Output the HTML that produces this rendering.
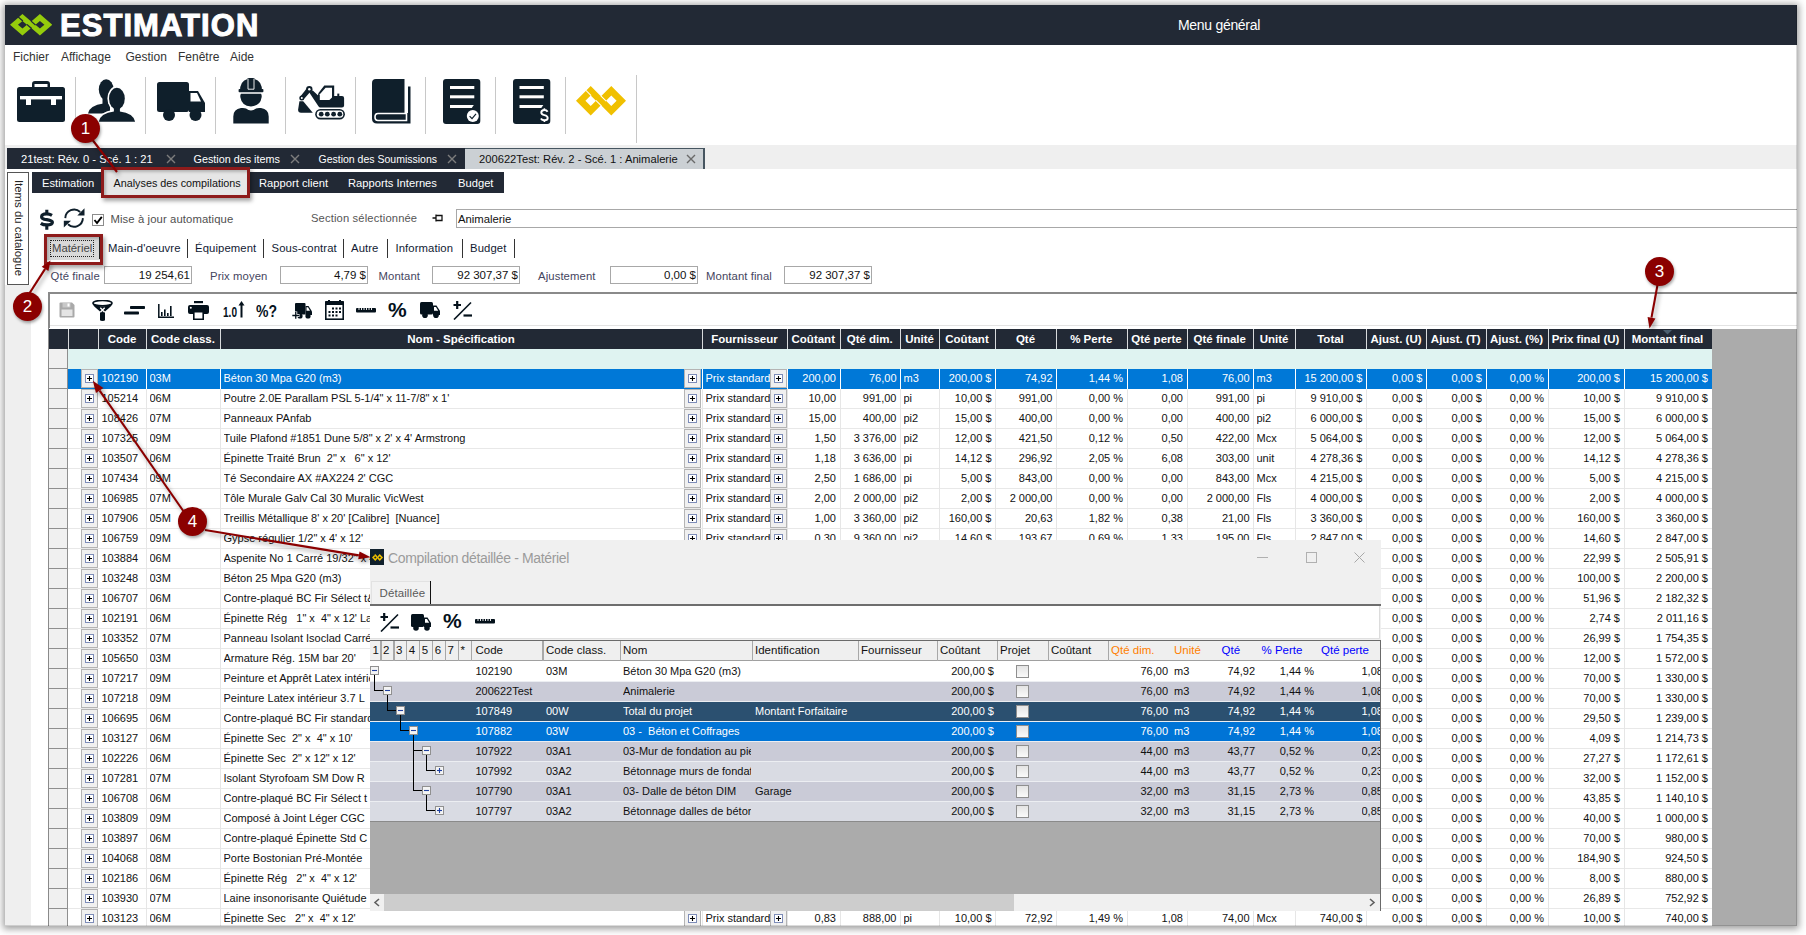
<!DOCTYPE html>
<html><head><meta charset="utf-8"><title>Estimation</title>
<style>html,body{margin:0;padding:0;background:#fff;width:1806px;height:935px;overflow:hidden;}
body{position:relative;font-family:"Liberation Sans",sans-serif;}
#win{position:absolute;left:0;top:0;width:1806px;height:935px;}
#win div,#win svg{position:absolute;box-sizing:border-box;}
.t{white-space:pre;font-size:11.5px;line-height:14px;color:#222;}
.shadow{box-shadow:0 0 6px 2px rgba(0,0,0,0.35);}
.hd{color:#fff;font-weight:bold;font-size:11.5px;}
.cl{font-size:11px;}
</style></head><body>
<div id="win">
<div style="left:5px;top:5px;width:1792px;height:921px;background:#fff;box-shadow:0 1px 7px 2px rgba(0,0,0,0.38);"></div><div style="left:5px;top:5px;width:1792px;height:40px;background:#222935;"></div><svg style="left:10px;top:14.1px;width:42.4px;height:21.5px" viewBox="0 0 34 20" preserveAspectRatio="none"><path fill="#95cc0c" fill-rule="evenodd" d="M0 10 L10 0 L20 10 L10 20 Z M6.4 10 L10 13.6 L13.6 10 L10 6.4 Z"/><path fill="#95cc0c" fill-rule="evenodd" d="M14 10 L24 0 L34 10 L24 20 Z M20.4 10 L24 13.6 L27.6 10 L24 6.4 Z"/><path d="M6.5 2.7 L10.3 6.5 M13.5 9.7 L17.3 13.5 M16.9 6.7 L20.5 10.3" stroke="#222935" stroke-width="1.1"/></svg><div class="t" style="left:60px;top:7px;font-size:31px;line-height:37px;font-weight:bold;color:#fff;letter-spacing:1.05px;-webkit-text-stroke:1px #fff;">ESTIMATION</div><div class="t" style="left:1178px;top:17px;font-size:14px;line-height:16px;color:#fff;letter-spacing:-0.3px;">Menu général</div><div class="t" style="left:13px;top:49.5px;font-size:12px;color:#333;">Fichier</div><div class="t" style="left:61px;top:49.5px;font-size:12px;color:#333;">Affichage</div><div class="t" style="left:125.5px;top:49.5px;font-size:12px;color:#333;">Gestion</div><div class="t" style="left:178px;top:49.5px;font-size:12px;color:#333;">Fenêtre</div><div class="t" style="left:230px;top:49.5px;font-size:12px;color:#333;">Aide</div><div style="left:75px;top:77px;width:1px;height:57px;background:#c8c8c8;"></div><div style="left:145px;top:77px;width:1px;height:57px;background:#c8c8c8;"></div><div style="left:215px;top:77px;width:1px;height:57px;background:#c8c8c8;"></div><div style="left:285px;top:77px;width:1px;height:57px;background:#c8c8c8;"></div><div style="left:355px;top:77px;width:1px;height:57px;background:#c8c8c8;"></div><div style="left:425px;top:77px;width:1px;height:57px;background:#c8c8c8;"></div><div style="left:495px;top:77px;width:1px;height:57px;background:#c8c8c8;"></div><div style="left:565px;top:77px;width:1px;height:57px;background:#c8c8c8;"></div><div style="left:636px;top:75px;width:1px;height:68px;background:#c8c8c8;"></div><svg style="left:17px;top:81px;width:48px;height:41px" viewBox="0 0 48 41"><g fill="#0f1f2b">
<path d="M15 6 V3 Q15 0 18 0 H30 Q33 0 33 3 V6 H30.5 V3 H17.5 V6 Z"/>
<rect x="0" y="6" width="48" height="35" rx="2.5"/></g>
<rect x="3" y="15" width="42" height="3.4" fill="#fff"/><rect x="9" y="18" width="5" height="6" fill="#fff"/><rect x="34" y="18" width="5" height="6" fill="#fff"/>
</svg><svg style="left:88px;top:79px;width:50px;height:45px" viewBox="0 0 50 45"><g fill="#0f1f2b">
<ellipse cx="18.2" cy="10.6" rx="7.4" ry="10.4"/><rect x="14.5" y="18" width="5.5" height="7.5"/>
<path d="M0 34.6 Q1.5 26.5 15.5 24.6 H22 V34.6 Z"/></g>
<g fill="#fff" stroke="#fff" stroke-width="3.2" stroke-linejoin="round"><ellipse cx="28.9" cy="19.6" rx="7.9" ry="10.9"/><rect x="25.9" y="27" width="6" height="7"/><path d="M10.7 42.8 Q12.5 34.2 26 32.6 H31.8 Q45.3 34.2 47.1 42.8 Z"/></g>
<g fill="#0f1f2b"><ellipse cx="28.9" cy="19.6" rx="7.9" ry="10.9"/><rect x="25.9" y="27" width="6" height="7"/><path d="M10.7 42.8 Q12.5 34.2 26 32.6 H31.8 Q45.3 34.2 47.1 42.8 Z"/></g>
</svg><svg style="left:157px;top:82px;width:48px;height:40px" viewBox="0 0 48 40"><g fill="#0f1f2b">
<rect x="0" y="0" width="32" height="30" rx="2.5"/>
<path d="M32 9 H41 L48 21 V30 H32 Z"/>
<circle cx="12" cy="33" r="6"/><circle cx="38.5" cy="33" r="6"/></g>
<path d="M33.5 11 H40 L44 19.5 H33.5 Z" fill="#fff"/>
</svg><svg style="left:233px;top:78px;width:36px;height:46px" viewBox="0 0 36 46"><g fill="#0f1f2b">
<path d="M7 13 Q7 3 14.5 1 V0 H21.5 V1 Q29 3 29 13 Z"/>
<rect x="5.6" y="11" width="24.8" height="3.2" rx="0.8"/>
<path d="M8 15.8 H28 Q29.2 17.5 28.4 20 Q27.5 27.5 18 28.6 Q8.5 27.5 7.6 20 Q6.8 17.5 8 15.8 Z"/>
<path d="M0.3 45.6 V38.5 Q0.3 31 8 30 Q11.5 29.6 13 30.6 Q15.5 32.6 18 32.6 Q20.5 32.6 23 30.6 Q24.5 29.6 28 30 Q35.7 31 35.7 38.5 V45.6 Z"/>
</g><path d="M15 0.6 V11.2 H21 V0.6" stroke="#fff" stroke-width="0.9" fill="none"/>
</svg><svg style="left:296px;top:84px;width:50px;height:37px" viewBox="0 0 50 37"><g fill="#0f1f2b">
<path d="M3.4 17.2 H7.2 L16.8 28.7 H5 Q2.1 28.7 2.1 25.8 Z"/>
<path d="M13.3 8.6 L16.8 6.5 L21.9 11.3 L22.5 9.1 L28.3 1.4 H38.2 V11.9 H46 Q48.1 11.9 48.1 14 V21.5 Q48.1 23.6 46 23.6 H24.2 Q23.2 23.6 22.6 22.6 Z"/>
<path d="M11 4 L15.5 6.5 L7.5 15.5 L4 13 Z"/>
<rect x="41.3" y="9.6" width="2" height="3"/>
<circle cx="13.3" cy="5.2" r="3.2"/><circle cx="5.8" cy="14" r="2.5"/>
<rect x="19.2" y="25" width="29.7" height="10.4" rx="5.2"/>
</g>
<circle cx="13.3" cy="5.2" r="1.2" fill="#fff"/><circle cx="5.8" cy="14" r="1" fill="#fff"/>
<path d="M23.8 10.25 L29.6 3.8 H36 V13.5 L33.4 16.1 H23.8 Z" fill="#fff"/>
<rect x="20.8" y="26.6" width="26.5" height="7.2" rx="3.6" fill="#fff"/>
<g fill="#0f1f2b"><circle cx="25.2" cy="30.2" r="2.4"/><circle cx="31.3" cy="30.2" r="2.4"/><circle cx="37.6" cy="30.2" r="2.4"/><circle cx="43.8" cy="30.2" r="2.4"/></g>
</svg><svg style="left:372px;top:79px;width:39px;height:45px" viewBox="0 0 39 45"><g fill="#0f1f2b">
<path d="M4 0 H32.5 V34 H36 V7.5 H38.5 V44.5 H5 Q0 44.5 0 39.5 V4 Q0 0 4 0 Z"/></g>
<path d="M6 34.5 H34.5 V41.5 H6 Q3 41.5 3 38 Q3 34.5 6 34.5 Z" fill="none" stroke="#fff" stroke-width="1.6"/>
</svg><svg style="left:442.5px;top:79px;width:38px;height:45px" viewBox="0 0 38 45"><rect x="0" y="0" width="37.3" height="45" rx="3" fill="#0f1f2b"/>
<g fill="#fff"><rect x="7" y="7" width="24.3" height="3"/><rect x="7" y="16.3" width="24.3" height="3"/><path d="M7 26 H30.8 L28.8 29 H7 Z"/>
<circle cx="29.8" cy="37" r="6"/></g><path d="M26.6 37.2 L29 39.6 L33 34.8" stroke="#0f1f2b" stroke-width="1.2" fill="none"/>
</svg><svg style="left:513px;top:79px;width:38px;height:45px" viewBox="0 0 38 45"><rect x="0" y="0" width="37.3" height="45" rx="3" fill="#0f1f2b"/>
<g fill="#fff"><rect x="6.5" y="7" width="24.3" height="3"/><rect x="6.5" y="16.3" width="24.3" height="3"/><path d="M6.5 26 H30.3 L28.3 29 H6.5 Z"/></g>
</svg><svg style="left:539px;top:107px;width:11px;height:16px" viewBox="0 0 11 16"><path d="M8.6 4.8 Q7.6 3 5.4 3 Q2.3 3 2.3 5.6 Q2.3 7.5 5.4 8.1 Q8.7 8.8 8.7 11 Q8.7 13.3 5.4 13.3 Q3 13.3 1.9 11.4" stroke="#fff" stroke-width="1.9" fill="none"/><path d="M5.4 1.2 V3.2 M5.4 13 V15" stroke="#fff" stroke-width="1.6"/></svg><svg style="left:576.1px;top:86.1px;width:50px;height:29.6px" viewBox="0 0 34 20" preserveAspectRatio="none"><path fill="#f0c000" fill-rule="evenodd" d="M0 10 L10 0 L20 10 L10 20 Z M6.4 10 L10 13.6 L13.6 10 L10 6.4 Z"/><path fill="#f0c000" fill-rule="evenodd" d="M14 10 L24 0 L34 10 L24 20 Z M20.4 10 L24 13.6 L27.6 10 L24 6.4 Z"/><path d="M6.5 2.7 L10.3 6.5 M13.5 9.7 L17.3 13.5 M16.9 6.7 L20.5 10.3" stroke="#fff" stroke-width="0.7"/></svg><div style="left:5px;top:145px;width:1792px;height:24px;background:#efefef;"></div><div style="left:7px;top:148px;width:458px;height:21px;background:#222935;"></div><div style="left:465px;top:148px;width:240px;height:21px;background:#cbd0d4;border-top:1px solid #465560;border-right:2px solid #465560;"></div><div class="t" style="left:21px;top:152px;color:#fff;font-size:11.2px;">21test: Rév. 0 - Scé. 1 : 21</div><div class="t" style="left:193.5px;top:152px;color:#fff;font-size:10.8px;">Gestion des items</div><div class="t" style="left:318.5px;top:152px;color:#fff;font-size:10.5px;">Gestion des Soumissions</div><div class="t" style="left:479px;top:152px;color:#111;font-size:11.2px;">200622Test: Rév. 2 - Scé. 1 : Animalerie</div><svg style="left:165.5px;top:154px;width:10px;height:10px" viewBox="0 0 10 10"><path d="M1 1 L9 9 M9 1 L1 9" stroke="#7d7d7d" stroke-width="1.4"/></svg><svg style="left:289.5px;top:154px;width:10px;height:10px" viewBox="0 0 10 10"><path d="M1 1 L9 9 M9 1 L1 9" stroke="#7d7d7d" stroke-width="1.4"/></svg><svg style="left:447px;top:154px;width:10px;height:10px" viewBox="0 0 10 10"><path d="M1 1 L9 9 M9 1 L1 9" stroke="#7d7d7d" stroke-width="1.4"/></svg><svg style="left:686px;top:154px;width:10px;height:10px" viewBox="0 0 10 10"><path d="M1 1 L9 9 M9 1 L1 9" stroke="#6a6a6a" stroke-width="1.4"/></svg><div style="left:32px;top:172px;width:472px;height:21px;background:#222935;"></div><div style="left:104px;top:170px;width:145px;height:25px;background:#e6e6e6;"></div><div class="t" style="left:42px;top:176px;color:#fff;font-size:11.2px;">Estimation</div><div class="t" style="left:113.5px;top:176px;color:#111;font-size:10.8px;">Analyses des compilations</div><div class="t" style="left:259px;top:176px;color:#fff;font-size:11.2px;">Rapport client</div><div class="t" style="left:348px;top:176px;color:#fff;font-size:11.2px;">Rapports Internes</div><div class="t" style="left:458px;top:176px;color:#fff;font-size:11.2px;">Budget</div><div style="left:7px;top:172px;width:22px;height:113px;border:1px solid #555;background:#fff;"></div><div class="t" style="left:-33px;top:221px;width:104px;height:14px;transform:rotate(90deg);font-size:11.4px;color:#222;text-align:center">Items du catalogue</div><div style="left:5px;top:285px;width:26px;height:641px;background:#efefef;"></div><div style="left:0;top:0;width:1797px;height:926px;overflow:hidden"><svg style="left:38px;top:209px;width:18px;height:22px" viewBox="0 0 18 22">
<path d="M14 6.4 Q11.5 4.9 8.8 4.9 Q3.6 4.9 3.6 7.9 Q3.6 9.8 8.8 10.7 Q14.4 11.7 14.4 13.3 Q14.4 15.9 8.8 15.9 Q5.2 15.9 2.8 14.3" stroke="#0f1f2b" stroke-width="3.2" fill="none"/>
<path d="M8.8 0.8 V4 M8.8 16.5 V20.7" stroke="#0f1f2b" stroke-width="3.1"/></svg><svg style="left:61px;top:206px;width:26px;height:24px" viewBox="0 0 26 24">
<path d="M4.3 12.1 A8.8 8.8 0 0 1 19.2 6" stroke="#0f1f2b" stroke-width="1.9" fill="none"/>
<path d="M21.9 12.1 A8.8 8.8 0 0 1 7 18.2" stroke="#0f1f2b" stroke-width="1.9" fill="none"/>
<path d="M23.5 2.2 V9.4 H16.3 Z" fill="#0f1f2b"/>
<path d="M2.8 14.7 H10 L2.8 21.6 Z" fill="#0f1f2b"/>
</svg><div style="left:92px;top:214px;width:12px;height:12px;border:1px solid #8c8c8c;background:#fff;"></div><svg style="left:93px;top:215px;width:10px;height:10px" viewBox="0 0 10 10"><path d="M1.5 5 L4 8 L8.8 1.8" stroke="#000" stroke-width="1.9" fill="none"/></svg><div class="t" style="left:110.5px;top:212px;color:#505050;font-size:11.3px;letter-spacing:0.1px;">Mise à jour automatique</div><div class="t" style="left:311px;top:211px;color:#555;font-size:11.2px;letter-spacing:0.15px;">Section sélectionnée</div><svg style="left:432px;top:213px;width:11px;height:10px" viewBox="0 0 11 10"><path d="M0.5 5 H4 M4 1.5 V8.5 M4 2.5 H10 V7.5 H4" stroke="#111" stroke-width="1.3" fill="none"/></svg><div style="left:456px;top:209px;width:1345px;height:19px;border:1px solid #a8a8a8;background:#fff;"></div><div class="t" style="left:458px;top:212px;color:#111;font-size:11.3px;">Animalerie</div><div style="left:46px;top:236px;width:54px;height:24px;background:#d9d9d9;"></div><div style="left:50px;top:240px;width:44px;height:17px;border:1px dotted #222;"></div><div style="left:99px;top:237px;width:1.5px;height:22px;background:#222;"></div><div class="t" style="left:52px;top:241px;color:#444;font-size:11.3px;">Matériel</div><div class="t" style="left:108px;top:241px;color:#111a33;font-size:11.3px;letter-spacing:0.1px;">Main-d'oeuvre</div><div class="t" style="left:195px;top:241px;color:#111a33;font-size:11.3px;letter-spacing:0.1px;">Équipement</div><div class="t" style="left:271.5px;top:241px;color:#111a33;font-size:11.3px;letter-spacing:0.1px;">Sous-contrat</div><div class="t" style="left:351px;top:241px;color:#111a33;font-size:11.3px;letter-spacing:0.1px;">Autre</div><div class="t" style="left:395.5px;top:241px;color:#111a33;font-size:11.3px;letter-spacing:0.1px;">Information</div><div class="t" style="left:470px;top:241px;color:#111a33;font-size:11.3px;letter-spacing:0.1px;">Budget</div><div style="left:186.5px;top:239px;width:1.2px;height:19px;background:#333;"></div><div style="left:262.5px;top:239px;width:1.2px;height:19px;background:#333;"></div><div style="left:342.5px;top:239px;width:1.2px;height:19px;background:#333;"></div><div style="left:386.5px;top:239px;width:1.2px;height:19px;background:#333;"></div><div style="left:461.5px;top:239px;width:1.2px;height:19px;background:#333;"></div><div style="left:513.5px;top:239px;width:1.2px;height:19px;background:#333;"></div><div class="t" style="left:50.5px;top:269px;color:#454560;font-size:11.3px;letter-spacing:0.1px;">Qté finale</div><div class="t" style="left:210px;top:269px;color:#454560;font-size:11.3px;letter-spacing:0.1px;">Prix moyen</div><div class="t" style="left:378.5px;top:269px;color:#454560;font-size:11.3px;letter-spacing:0.1px;">Montant</div><div class="t" style="left:538px;top:269px;color:#454560;font-size:11.3px;letter-spacing:0.1px;">Ajustement</div><div class="t" style="left:706px;top:269px;color:#454560;font-size:11.3px;letter-spacing:0.1px;">Montant final</div><div style="left:104px;top:266px;width:88px;height:18px;border:1px solid #a8a8a8;background:#fff;"></div><div class="t" style="left:104px;top:268px;width:86px;text-align:right;color:#111;font-size:11.5px;">19 254,61</div><div style="left:280px;top:266px;width:88px;height:18px;border:1px solid #a8a8a8;background:#fff;"></div><div class="t" style="left:280px;top:268px;width:86px;text-align:right;color:#111;font-size:11.5px;">4,79 $</div><div style="left:432px;top:266px;width:88px;height:18px;border:1px solid #a8a8a8;background:#fff;"></div><div class="t" style="left:432px;top:268px;width:86px;text-align:right;color:#111;font-size:11.5px;">92 307,37 $</div><div style="left:610px;top:266px;width:88px;height:18px;border:1px solid #a8a8a8;background:#fff;"></div><div class="t" style="left:610px;top:268px;width:86px;text-align:right;color:#111;font-size:11.5px;">0,00 $</div><div style="left:784px;top:266px;width:88px;height:18px;border:1px solid #a8a8a8;background:#fff;"></div><div class="t" style="left:784px;top:268px;width:86px;text-align:right;color:#111;font-size:11.5px;">92 307,37 $</div><div style="left:48px;top:292px;width:1749px;height:2px;background:#8a8a8a;"></div><div style="left:48px;top:292px;width:2px;height:36px;background:#8a8a8a;"></div><div style="left:50px;top:325px;width:1747px;height:1px;background:#e3e3e3;"></div><svg style="left:58.5px;top:302px;width:16px;height:16px" viewBox="0 0 16 16"><path d="M0.5 1.5 Q0.5 0.5 1.5 0.5 H13 L15.5 3 V14.5 Q15.5 15.5 14.5 15.5 H1.5 Q0.5 15.5 0.5 14.5 Z" fill="#a9a9a9"/>
<rect x="2.5" y="7.5" width="11" height="6.5" fill="#e4e4e4"/><rect x="3.5" y="1" width="8" height="4.5" fill="#c8c8c8"/><rect x="8.5" y="1.5" width="2" height="3" fill="#fff"/></svg><svg style="left:91.5px;top:299.5px;width:21px;height:21px" viewBox="0 0 21 21">
<ellipse cx="10.5" cy="3.2" rx="9.5" ry="2.7" fill="none" stroke="#04111b" stroke-width="1.6"/>
<path d="M1 3.5 Q1 6 4 8 L8 11.5 V20 Q8 21 10.5 21 Q13 21 13 20 V11.5 L17 8 Q20 6 20 3.5 Q15 6.5 10.5 6.5 Q6 6.5 1 3.5 Z" fill="#04111b"/>
<path d="M8.3 7.8 L12.7 12.2 M12.7 7.8 L8.3 12.2" stroke="#fff" stroke-width="1.4"/></svg><svg style="left:123.5px;top:306px;width:21px;height:9px" viewBox="0 0 21 9"><rect x="6" y="0" width="15" height="3" rx="0.8" fill="#04111b"/><rect x="0" y="5.5" width="15" height="3" rx="0.8" fill="#04111b"/></svg><svg style="left:158px;top:303.5px;width:16px;height:14px" viewBox="0 0 16 14"><path d="M0.8 0 V13.2 H16" stroke="#04111b" stroke-width="1.5" fill="none"/>
<g fill="#04111b"><rect x="3" y="8" width="1.6" height="4"/><rect x="6" y="5.5" width="1.6" height="6.5"/><rect x="9" y="9" width="1.6" height="3"/><rect x="12" y="2" width="1.6" height="10"/></g></svg><svg style="left:187.5px;top:300.5px;width:21px;height:19px" viewBox="0 0 21 19"><g fill="#04111b">
<rect x="6" y="0" width="9" height="2.2"/><rect x="0" y="4" width="21" height="9" rx="2"/><rect x="5" y="11" width="11" height="8"/></g>
<rect x="6.6" y="11.5" width="7.8" height="6" fill="#fff"/><circle cx="2.8" cy="6.8" r="1" fill="#fff"/></svg><svg style="left:223px;top:300px;width:22px;height:18px" viewBox="0 0 22 18">
<text x="0" y="17" font-family="Liberation Sans" font-weight="bold" font-size="15.5" fill="#04111b" textLength="14" lengthAdjust="spacingAndGlyphs">1.0</text>
<path d="M18.5 17.5 V3" stroke="#04111b" stroke-width="2"/><path d="M15.5 5.5 L18.5 1 L21.5 5.5 Z" fill="#04111b"/></svg><svg style="left:255.5px;top:299.5px;width:21px;height:20px" viewBox="0 0 21 20">
<text x="0" y="17" font-family="Liberation Sans" font-weight="bold" font-size="17" fill="#04111b" textLength="21" lengthAdjust="spacingAndGlyphs">%?</text></svg><svg style="left:292px;top:302.5px;width:20px;height:16px" viewBox="0 0 20 16"><g fill="#04111b">
<rect x="3" y="0" width="10.5" height="11.5" rx="1"/><path d="M13.5 3 H16.5 L20 8.5 V12 H13.5 Z"/><circle cx="8" cy="13" r="2.6"/><circle cx="16" cy="13" r="2.6"/></g>
<path d="M14.5 4.3 H16 L18 7.8 H14.5 Z" fill="#fff"/>
<path d="M0 12.5 H7.5 M3.75 8.5 V16" stroke="#fff" stroke-width="3"/><path d="M0.3 12.5 H7.2 M3.75 9 V15.7" stroke="#04111b" stroke-width="1.3"/></svg><svg style="left:325px;top:300px;width:19px;height:20px" viewBox="0 0 19 20"><rect x="0.8" y="2" width="17.4" height="17.2" fill="none" stroke="#04111b" stroke-width="1.6"/>
<rect x="0.8" y="1" width="17.4" height="4" fill="#04111b"/><rect x="3" y="0" width="2" height="3" fill="#04111b"/><rect x="14" y="0" width="2" height="3" fill="#04111b"/>
<g fill="#04111b"><rect x="7" y="7.5" width="2" height="2"/><rect x="10.5" y="7.5" width="2" height="2"/><rect x="14" y="7.5" width="2" height="2"/>
<rect x="3.5" y="11" width="2" height="2"/><rect x="7" y="11" width="2" height="2"/><rect x="10.5" y="11" width="2" height="2"/><rect x="14" y="11" width="2" height="2"/>
<rect x="3.5" y="14.5" width="2" height="2"/><rect x="7" y="14.5" width="2" height="2"/><rect x="10.5" y="14.5" width="2" height="2"/></g></svg><svg style="left:356px;top:307.5px;width:20px;height:5px" viewBox="0 0 20 5"><rect x="0" y="0" width="20" height="4.5" rx="1" fill="#04111b"/>
<g stroke="#fff" stroke-width="0.9"><path d="M3 0 V2 M5.5 0 V2 M8 0 V2 M10.5 0 V2 M13 0 V2 M15.5 0 V2"/></g></svg><div class="t" style="left:388px;top:297.5px;font-size:21px;line-height:24px;font-weight:bold;color:#04111b">%</div><svg style="left:420px;top:302px;width:20px;height:16px" viewBox="0 0 20 16"><g fill="#04111b">
<rect x="0" y="0" width="13" height="12.5" rx="1.5"/><path d="M13 3.5 H16.5 L20 9 V13 H13 Z"/><circle cx="5" cy="13.2" r="2.8"/><circle cx="16" cy="13.2" r="2.8"/></g>
<path d="M14 5 H16 L18.2 8.8 H14 Z" fill="#fff"/></svg><svg style="left:452.5px;top:300px;width:20px;height:20px" viewBox="0 0 20 20">
<path d="M0.5 5 H8 M4.2 1 V9" stroke="#04111b" stroke-width="2.2"/>
<path d="M1 19.5 L18 2.5" stroke="#04111b" stroke-width="1.6"/>
<path d="M10.5 15.5 H19" stroke="#04111b" stroke-width="2.2"/></svg><div style="left:1711.5px;top:328.5px;width:85.5px;height:600px;background:#ababab;"></div><div style="left:48px;top:328.5px;width:1663.5px;height:20px;background:#222935;"></div><div style="left:68px;top:328.5px;width:1px;height:20px;background:#d8dadc;"></div><div style="left:98px;top:328.5px;width:1px;height:20px;background:#d8dadc;"></div><div class="t hd" style="left:98px;top:331.5px;width:48px;text-align:center">Code</div><div style="left:146px;top:328.5px;width:1px;height:20px;background:#d8dadc;"></div><div class="t hd" style="left:146px;top:331.5px;width:74px;text-align:center">Code class.</div><div style="left:220px;top:328.5px;width:1px;height:20px;background:#d8dadc;"></div><div class="t hd" style="left:220px;top:331.5px;width:482px;text-align:center">Nom - Spécification</div><div style="left:702px;top:328.5px;width:1px;height:20px;background:#d8dadc;"></div><div class="t hd" style="left:702px;top:331.5px;width:85px;text-align:center">Fournisseur</div><div style="left:787px;top:328.5px;width:1px;height:20px;background:#d8dadc;"></div><div class="t hd" style="left:787px;top:331.5px;width:52.5px;text-align:center">Coûtant</div><div style="left:839.5px;top:328.5px;width:1px;height:20px;background:#d8dadc;"></div><div class="t hd" style="left:839.5px;top:331.5px;width:60.5px;text-align:center">Qté dim.</div><div style="left:900px;top:328.5px;width:1px;height:20px;background:#d8dadc;"></div><div class="t hd" style="left:900px;top:331.5px;width:39px;text-align:center">Unité</div><div style="left:939px;top:328.5px;width:1px;height:20px;background:#d8dadc;"></div><div class="t hd" style="left:939px;top:331.5px;width:56px;text-align:center">Coûtant</div><div style="left:995px;top:328.5px;width:1px;height:20px;background:#d8dadc;"></div><div class="t hd" style="left:995px;top:331.5px;width:61px;text-align:center">Qté</div><div style="left:1056px;top:328.5px;width:1px;height:20px;background:#d8dadc;"></div><div class="t hd" style="left:1056px;top:331.5px;width:70.5px;text-align:center">% Perte</div><div style="left:1126.5px;top:328.5px;width:1px;height:20px;background:#d8dadc;"></div><div class="t hd" style="left:1126.5px;top:331.5px;width:60.0px;text-align:center">Qté perte</div><div style="left:1186.5px;top:328.5px;width:1px;height:20px;background:#d8dadc;"></div><div class="t hd" style="left:1186.5px;top:331.5px;width:66.5px;text-align:center">Qté finale</div><div style="left:1253px;top:328.5px;width:1px;height:20px;background:#d8dadc;"></div><div class="t hd" style="left:1253px;top:331.5px;width:42px;text-align:center">Unité</div><div style="left:1295px;top:328.5px;width:1px;height:20px;background:#d8dadc;"></div><div class="t hd" style="left:1295px;top:331.5px;width:71px;text-align:center">Total</div><div style="left:1366px;top:328.5px;width:1px;height:20px;background:#d8dadc;"></div><div class="t hd" style="left:1366px;top:331.5px;width:60px;text-align:center">Ajust. (U)</div><div style="left:1426px;top:328.5px;width:1px;height:20px;background:#d8dadc;"></div><div class="t hd" style="left:1426px;top:331.5px;width:59.5px;text-align:center">Ajust. (T)</div><div style="left:1485.5px;top:328.5px;width:1px;height:20px;background:#d8dadc;"></div><div class="t hd" style="left:1485.5px;top:331.5px;width:62.0px;text-align:center">Ajust. (%)</div><div style="left:1547.5px;top:328.5px;width:1px;height:20px;background:#d8dadc;"></div><div class="t hd" style="left:1547.5px;top:331.5px;width:76.0px;text-align:center">Prix final (U)</div><div style="left:1623.5px;top:328.5px;width:1px;height:20px;background:#d8dadc;"></div><div class="t hd" style="left:1623.5px;top:331.5px;width:88.0px;text-align:center">Montant final</div><svg style="left:1663px;top:329.5px;width:9px;height:5px" viewBox="0 0 9 5"><path d="M0 0 H9 L4.5 4.5 Z" fill="#4d6070"/></svg><div style="left:48px;top:348.5px;width:20px;height:20px;background:#f0f0f0;border-right:1px solid #8f8f8f;border-bottom:1px solid #8f8f8f;"></div><div style="left:68px;top:348.5px;width:1643.5px;height:20px;background:#dff3f1;"></div><div style="left:48px;top:368.5px;width:20px;height:20px;background:#f0f0f0;border-right:1px solid #8f8f8f;border-bottom:1px solid #8f8f8f;"></div><div style="left:68px;top:368.5px;width:1643.5px;height:20px;background:#0078d7;"></div><div style="left:146px;top:368.5px;width:1px;height:20px;background:#ffffff;"></div><div style="left:220px;top:368.5px;width:1px;height:20px;background:#ffffff;"></div><div style="left:702px;top:368.5px;width:1px;height:20px;background:#ffffff;"></div><div style="left:787px;top:368.5px;width:1px;height:20px;background:#ffffff;"></div><div style="left:839.5px;top:368.5px;width:1px;height:20px;background:#ffffff;"></div><div style="left:900px;top:368.5px;width:1px;height:20px;background:#ffffff;"></div><div style="left:939px;top:368.5px;width:1px;height:20px;background:#ffffff;"></div><div style="left:995px;top:368.5px;width:1px;height:20px;background:#ffffff;"></div><div style="left:1056px;top:368.5px;width:1px;height:20px;background:#ffffff;"></div><div style="left:1126.5px;top:368.5px;width:1px;height:20px;background:#ffffff;"></div><div style="left:1186.5px;top:368.5px;width:1px;height:20px;background:#ffffff;"></div><div style="left:1253px;top:368.5px;width:1px;height:20px;background:#ffffff;"></div><div style="left:1295px;top:368.5px;width:1px;height:20px;background:#ffffff;"></div><div style="left:1366px;top:368.5px;width:1px;height:20px;background:#ffffff;"></div><div style="left:1426px;top:368.5px;width:1px;height:20px;background:#ffffff;"></div><div style="left:1485.5px;top:368.5px;width:1px;height:20px;background:#ffffff;"></div><div style="left:1547.5px;top:368.5px;width:1px;height:20px;background:#ffffff;"></div><div style="left:1623.5px;top:368.5px;width:1px;height:20px;background:#ffffff;"></div><div style="left:81px;top:369.0px;width:16.5px;height:19px;background:#f0f0f0;border:1px solid #b4b4b4;"></div><svg style="left:84.8px;top:374.0px;width:9px;height:9px" viewBox="0 0 9 9"><rect x="0.5" y="0.5" width="8" height="8" fill="#fff" stroke="#7d8cb8" stroke-width="1"/><path d="M2 4.5 H7 M4.5 2 V7" stroke="#000" stroke-width="1.1"/></svg><div class="t cl" style="left:101.5px;top:370.7px;width:43px;overflow:hidden;color:#fff">102190</div><div class="t cl" style="left:149.5px;top:370.7px;width:69px;overflow:hidden;color:#fff">03M</div><div class="t cl" style="left:223.5px;top:370.7px;width:477px;overflow:hidden;color:#fff">Béton 30 Mpa G20 (m3)</div><div class="t cl" style="left:705.5px;top:370.7px;width:65px;overflow:hidden;color:#fff">Prix standard</div><div class="t cl" style="left:787px;top:370.7px;width:49.0px;text-align:right;color:#fff">200,00</div><div class="t cl" style="left:839.5px;top:370.7px;width:57.0px;text-align:right;color:#fff">76,00</div><div class="t cl" style="left:903.5px;top:370.7px;width:34px;overflow:hidden;color:#fff">m3</div><div class="t cl" style="left:939px;top:370.7px;width:52.5px;text-align:right;color:#fff">200,00 $</div><div class="t cl" style="left:995px;top:370.7px;width:57.5px;text-align:right;color:#fff">74,92</div><div class="t cl" style="left:1056px;top:370.7px;width:67.0px;text-align:right;color:#fff">1,44 %</div><div class="t cl" style="left:1126.5px;top:370.7px;width:56.5px;text-align:right;color:#fff">1,08</div><div class="t cl" style="left:1186.5px;top:370.7px;width:63.0px;text-align:right;color:#fff">76,00</div><div class="t cl" style="left:1256.5px;top:370.7px;width:37px;overflow:hidden;color:#fff">m3</div><div class="t cl" style="left:1295px;top:370.7px;width:67.5px;text-align:right;color:#fff">15 200,00 $</div><div class="t cl" style="left:1366px;top:370.7px;width:56.5px;text-align:right;color:#fff">0,00 $</div><div class="t cl" style="left:1426px;top:370.7px;width:56.0px;text-align:right;color:#fff">0,00 $</div><div class="t cl" style="left:1485.5px;top:370.7px;width:58.5px;text-align:right;color:#fff">0,00 %</div><div class="t cl" style="left:1547.5px;top:370.7px;width:72.5px;text-align:right;color:#fff">200,00 $</div><div class="t cl" style="left:1623.5px;top:370.7px;width:84.5px;text-align:right;color:#fff">15 200,00 $</div><div style="left:684px;top:369.0px;width:16.5px;height:19px;background:#f0f0f0;border:1px solid #b4b4b4;"></div><svg style="left:687.8px;top:374.0px;width:9px;height:9px" viewBox="0 0 9 9"><rect x="0.5" y="0.5" width="8" height="8" fill="#fff" stroke="#7d8cb8" stroke-width="1"/><path d="M2 4.5 H7 M4.5 2 V7" stroke="#000" stroke-width="1.1"/></svg><div style="left:770px;top:369.0px;width:16.5px;height:19px;background:#f0f0f0;border:1px solid #b4b4b4;"></div><svg style="left:773.8px;top:374.0px;width:9px;height:9px" viewBox="0 0 9 9"><rect x="0.5" y="0.5" width="8" height="8" fill="#fff" stroke="#7d8cb8" stroke-width="1"/><path d="M2 4.5 H7 M4.5 2 V7" stroke="#000" stroke-width="1.1"/></svg><div style="left:48px;top:388.5px;width:20px;height:20px;background:#f0f0f0;border-right:1px solid #8f8f8f;border-bottom:1px solid #8f8f8f;"></div><div style="left:68px;top:388.5px;width:1643.5px;height:20px;background:#fff;"></div><div style="left:68px;top:407.5px;width:1643.5px;height:1px;background:#e8e8e8;"></div><div style="left:146px;top:388.5px;width:1px;height:20px;background:#e6e6e6;"></div><div style="left:220px;top:388.5px;width:1px;height:20px;background:#e6e6e6;"></div><div style="left:702px;top:388.5px;width:1px;height:20px;background:#e6e6e6;"></div><div style="left:787px;top:388.5px;width:1px;height:20px;background:#e6e6e6;"></div><div style="left:839.5px;top:388.5px;width:1px;height:20px;background:#e6e6e6;"></div><div style="left:900px;top:388.5px;width:1px;height:20px;background:#e6e6e6;"></div><div style="left:939px;top:388.5px;width:1px;height:20px;background:#e6e6e6;"></div><div style="left:995px;top:388.5px;width:1px;height:20px;background:#e6e6e6;"></div><div style="left:1056px;top:388.5px;width:1px;height:20px;background:#e6e6e6;"></div><div style="left:1126.5px;top:388.5px;width:1px;height:20px;background:#e6e6e6;"></div><div style="left:1186.5px;top:388.5px;width:1px;height:20px;background:#e6e6e6;"></div><div style="left:1253px;top:388.5px;width:1px;height:20px;background:#e6e6e6;"></div><div style="left:1295px;top:388.5px;width:1px;height:20px;background:#e6e6e6;"></div><div style="left:1366px;top:388.5px;width:1px;height:20px;background:#e6e6e6;"></div><div style="left:1426px;top:388.5px;width:1px;height:20px;background:#e6e6e6;"></div><div style="left:1485.5px;top:388.5px;width:1px;height:20px;background:#e6e6e6;"></div><div style="left:1547.5px;top:388.5px;width:1px;height:20px;background:#e6e6e6;"></div><div style="left:1623.5px;top:388.5px;width:1px;height:20px;background:#e6e6e6;"></div><div style="left:81px;top:389.0px;width:16.5px;height:19px;background:#f0f0f0;border:1px solid #b4b4b4;"></div><svg style="left:84.8px;top:394.0px;width:9px;height:9px" viewBox="0 0 9 9"><rect x="0.5" y="0.5" width="8" height="8" fill="#fff" stroke="#7d8cb8" stroke-width="1"/><path d="M2 4.5 H7 M4.5 2 V7" stroke="#000" stroke-width="1.1"/></svg><div class="t cl" style="left:101.5px;top:390.7px;width:43px;overflow:hidden;color:#111">105214</div><div class="t cl" style="left:149.5px;top:390.7px;width:69px;overflow:hidden;color:#111">06M</div><div class="t cl" style="left:223.5px;top:390.7px;width:477px;overflow:hidden;color:#111">Poutre 2.0E Parallam PSL 5-1/4" x 11-7/8" x 1'</div><div class="t cl" style="left:705.5px;top:390.7px;width:65px;overflow:hidden;color:#111">Prix standard</div><div class="t cl" style="left:787px;top:390.7px;width:49.0px;text-align:right;color:#111">10,00</div><div class="t cl" style="left:839.5px;top:390.7px;width:57.0px;text-align:right;color:#111">991,00</div><div class="t cl" style="left:903.5px;top:390.7px;width:34px;overflow:hidden;color:#111">pi</div><div class="t cl" style="left:939px;top:390.7px;width:52.5px;text-align:right;color:#111">10,00 $</div><div class="t cl" style="left:995px;top:390.7px;width:57.5px;text-align:right;color:#111">991,00</div><div class="t cl" style="left:1056px;top:390.7px;width:67.0px;text-align:right;color:#111">0,00 %</div><div class="t cl" style="left:1126.5px;top:390.7px;width:56.5px;text-align:right;color:#111">0,00</div><div class="t cl" style="left:1186.5px;top:390.7px;width:63.0px;text-align:right;color:#111">991,00</div><div class="t cl" style="left:1256.5px;top:390.7px;width:37px;overflow:hidden;color:#111">pi</div><div class="t cl" style="left:1295px;top:390.7px;width:67.5px;text-align:right;color:#111">9 910,00 $</div><div class="t cl" style="left:1366px;top:390.7px;width:56.5px;text-align:right;color:#111">0,00 $</div><div class="t cl" style="left:1426px;top:390.7px;width:56.0px;text-align:right;color:#111">0,00 $</div><div class="t cl" style="left:1485.5px;top:390.7px;width:58.5px;text-align:right;color:#111">0,00 %</div><div class="t cl" style="left:1547.5px;top:390.7px;width:72.5px;text-align:right;color:#111">10,00 $</div><div class="t cl" style="left:1623.5px;top:390.7px;width:84.5px;text-align:right;color:#111">9 910,00 $</div><div style="left:684px;top:389.0px;width:16.5px;height:19px;background:#f0f0f0;border:1px solid #b4b4b4;"></div><svg style="left:687.8px;top:394.0px;width:9px;height:9px" viewBox="0 0 9 9"><rect x="0.5" y="0.5" width="8" height="8" fill="#fff" stroke="#7d8cb8" stroke-width="1"/><path d="M2 4.5 H7 M4.5 2 V7" stroke="#000" stroke-width="1.1"/></svg><div style="left:770px;top:389.0px;width:16.5px;height:19px;background:#f0f0f0;border:1px solid #b4b4b4;"></div><svg style="left:773.8px;top:394.0px;width:9px;height:9px" viewBox="0 0 9 9"><rect x="0.5" y="0.5" width="8" height="8" fill="#fff" stroke="#7d8cb8" stroke-width="1"/><path d="M2 4.5 H7 M4.5 2 V7" stroke="#000" stroke-width="1.1"/></svg><div style="left:48px;top:408.5px;width:20px;height:20px;background:#f0f0f0;border-right:1px solid #8f8f8f;border-bottom:1px solid #8f8f8f;"></div><div style="left:68px;top:408.5px;width:1643.5px;height:20px;background:#fff;"></div><div style="left:68px;top:427.5px;width:1643.5px;height:1px;background:#e8e8e8;"></div><div style="left:146px;top:408.5px;width:1px;height:20px;background:#e6e6e6;"></div><div style="left:220px;top:408.5px;width:1px;height:20px;background:#e6e6e6;"></div><div style="left:702px;top:408.5px;width:1px;height:20px;background:#e6e6e6;"></div><div style="left:787px;top:408.5px;width:1px;height:20px;background:#e6e6e6;"></div><div style="left:839.5px;top:408.5px;width:1px;height:20px;background:#e6e6e6;"></div><div style="left:900px;top:408.5px;width:1px;height:20px;background:#e6e6e6;"></div><div style="left:939px;top:408.5px;width:1px;height:20px;background:#e6e6e6;"></div><div style="left:995px;top:408.5px;width:1px;height:20px;background:#e6e6e6;"></div><div style="left:1056px;top:408.5px;width:1px;height:20px;background:#e6e6e6;"></div><div style="left:1126.5px;top:408.5px;width:1px;height:20px;background:#e6e6e6;"></div><div style="left:1186.5px;top:408.5px;width:1px;height:20px;background:#e6e6e6;"></div><div style="left:1253px;top:408.5px;width:1px;height:20px;background:#e6e6e6;"></div><div style="left:1295px;top:408.5px;width:1px;height:20px;background:#e6e6e6;"></div><div style="left:1366px;top:408.5px;width:1px;height:20px;background:#e6e6e6;"></div><div style="left:1426px;top:408.5px;width:1px;height:20px;background:#e6e6e6;"></div><div style="left:1485.5px;top:408.5px;width:1px;height:20px;background:#e6e6e6;"></div><div style="left:1547.5px;top:408.5px;width:1px;height:20px;background:#e6e6e6;"></div><div style="left:1623.5px;top:408.5px;width:1px;height:20px;background:#e6e6e6;"></div><div style="left:81px;top:409.0px;width:16.5px;height:19px;background:#f0f0f0;border:1px solid #b4b4b4;"></div><svg style="left:84.8px;top:414.0px;width:9px;height:9px" viewBox="0 0 9 9"><rect x="0.5" y="0.5" width="8" height="8" fill="#fff" stroke="#7d8cb8" stroke-width="1"/><path d="M2 4.5 H7 M4.5 2 V7" stroke="#000" stroke-width="1.1"/></svg><div class="t cl" style="left:101.5px;top:410.7px;width:43px;overflow:hidden;color:#111">108426</div><div class="t cl" style="left:149.5px;top:410.7px;width:69px;overflow:hidden;color:#111">07M</div><div class="t cl" style="left:223.5px;top:410.7px;width:477px;overflow:hidden;color:#111">Panneaux PAnfab</div><div class="t cl" style="left:705.5px;top:410.7px;width:65px;overflow:hidden;color:#111">Prix standard</div><div class="t cl" style="left:787px;top:410.7px;width:49.0px;text-align:right;color:#111">15,00</div><div class="t cl" style="left:839.5px;top:410.7px;width:57.0px;text-align:right;color:#111">400,00</div><div class="t cl" style="left:903.5px;top:410.7px;width:34px;overflow:hidden;color:#111">pi2</div><div class="t cl" style="left:939px;top:410.7px;width:52.5px;text-align:right;color:#111">15,00 $</div><div class="t cl" style="left:995px;top:410.7px;width:57.5px;text-align:right;color:#111">400,00</div><div class="t cl" style="left:1056px;top:410.7px;width:67.0px;text-align:right;color:#111">0,00 %</div><div class="t cl" style="left:1126.5px;top:410.7px;width:56.5px;text-align:right;color:#111">0,00</div><div class="t cl" style="left:1186.5px;top:410.7px;width:63.0px;text-align:right;color:#111">400,00</div><div class="t cl" style="left:1256.5px;top:410.7px;width:37px;overflow:hidden;color:#111">pi2</div><div class="t cl" style="left:1295px;top:410.7px;width:67.5px;text-align:right;color:#111">6 000,00 $</div><div class="t cl" style="left:1366px;top:410.7px;width:56.5px;text-align:right;color:#111">0,00 $</div><div class="t cl" style="left:1426px;top:410.7px;width:56.0px;text-align:right;color:#111">0,00 $</div><div class="t cl" style="left:1485.5px;top:410.7px;width:58.5px;text-align:right;color:#111">0,00 %</div><div class="t cl" style="left:1547.5px;top:410.7px;width:72.5px;text-align:right;color:#111">15,00 $</div><div class="t cl" style="left:1623.5px;top:410.7px;width:84.5px;text-align:right;color:#111">6 000,00 $</div><div style="left:684px;top:409.0px;width:16.5px;height:19px;background:#f0f0f0;border:1px solid #b4b4b4;"></div><svg style="left:687.8px;top:414.0px;width:9px;height:9px" viewBox="0 0 9 9"><rect x="0.5" y="0.5" width="8" height="8" fill="#fff" stroke="#7d8cb8" stroke-width="1"/><path d="M2 4.5 H7 M4.5 2 V7" stroke="#000" stroke-width="1.1"/></svg><div style="left:770px;top:409.0px;width:16.5px;height:19px;background:#f0f0f0;border:1px solid #b4b4b4;"></div><svg style="left:773.8px;top:414.0px;width:9px;height:9px" viewBox="0 0 9 9"><rect x="0.5" y="0.5" width="8" height="8" fill="#fff" stroke="#7d8cb8" stroke-width="1"/><path d="M2 4.5 H7 M4.5 2 V7" stroke="#000" stroke-width="1.1"/></svg><div style="left:48px;top:428.5px;width:20px;height:20px;background:#f0f0f0;border-right:1px solid #8f8f8f;border-bottom:1px solid #8f8f8f;"></div><div style="left:68px;top:428.5px;width:1643.5px;height:20px;background:#fff;"></div><div style="left:68px;top:447.5px;width:1643.5px;height:1px;background:#e8e8e8;"></div><div style="left:146px;top:428.5px;width:1px;height:20px;background:#e6e6e6;"></div><div style="left:220px;top:428.5px;width:1px;height:20px;background:#e6e6e6;"></div><div style="left:702px;top:428.5px;width:1px;height:20px;background:#e6e6e6;"></div><div style="left:787px;top:428.5px;width:1px;height:20px;background:#e6e6e6;"></div><div style="left:839.5px;top:428.5px;width:1px;height:20px;background:#e6e6e6;"></div><div style="left:900px;top:428.5px;width:1px;height:20px;background:#e6e6e6;"></div><div style="left:939px;top:428.5px;width:1px;height:20px;background:#e6e6e6;"></div><div style="left:995px;top:428.5px;width:1px;height:20px;background:#e6e6e6;"></div><div style="left:1056px;top:428.5px;width:1px;height:20px;background:#e6e6e6;"></div><div style="left:1126.5px;top:428.5px;width:1px;height:20px;background:#e6e6e6;"></div><div style="left:1186.5px;top:428.5px;width:1px;height:20px;background:#e6e6e6;"></div><div style="left:1253px;top:428.5px;width:1px;height:20px;background:#e6e6e6;"></div><div style="left:1295px;top:428.5px;width:1px;height:20px;background:#e6e6e6;"></div><div style="left:1366px;top:428.5px;width:1px;height:20px;background:#e6e6e6;"></div><div style="left:1426px;top:428.5px;width:1px;height:20px;background:#e6e6e6;"></div><div style="left:1485.5px;top:428.5px;width:1px;height:20px;background:#e6e6e6;"></div><div style="left:1547.5px;top:428.5px;width:1px;height:20px;background:#e6e6e6;"></div><div style="left:1623.5px;top:428.5px;width:1px;height:20px;background:#e6e6e6;"></div><div style="left:81px;top:429.0px;width:16.5px;height:19px;background:#f0f0f0;border:1px solid #b4b4b4;"></div><svg style="left:84.8px;top:434.0px;width:9px;height:9px" viewBox="0 0 9 9"><rect x="0.5" y="0.5" width="8" height="8" fill="#fff" stroke="#7d8cb8" stroke-width="1"/><path d="M2 4.5 H7 M4.5 2 V7" stroke="#000" stroke-width="1.1"/></svg><div class="t cl" style="left:101.5px;top:430.7px;width:43px;overflow:hidden;color:#111">107325</div><div class="t cl" style="left:149.5px;top:430.7px;width:69px;overflow:hidden;color:#111">09M</div><div class="t cl" style="left:223.5px;top:430.7px;width:477px;overflow:hidden;color:#111">Tuile Plafond #1851 Dune 5/8" x 2' x 4' Armstrong</div><div class="t cl" style="left:705.5px;top:430.7px;width:65px;overflow:hidden;color:#111">Prix standard</div><div class="t cl" style="left:787px;top:430.7px;width:49.0px;text-align:right;color:#111">1,50</div><div class="t cl" style="left:839.5px;top:430.7px;width:57.0px;text-align:right;color:#111">3 376,00</div><div class="t cl" style="left:903.5px;top:430.7px;width:34px;overflow:hidden;color:#111">pi2</div><div class="t cl" style="left:939px;top:430.7px;width:52.5px;text-align:right;color:#111">12,00 $</div><div class="t cl" style="left:995px;top:430.7px;width:57.5px;text-align:right;color:#111">421,50</div><div class="t cl" style="left:1056px;top:430.7px;width:67.0px;text-align:right;color:#111">0,12 %</div><div class="t cl" style="left:1126.5px;top:430.7px;width:56.5px;text-align:right;color:#111">0,50</div><div class="t cl" style="left:1186.5px;top:430.7px;width:63.0px;text-align:right;color:#111">422,00</div><div class="t cl" style="left:1256.5px;top:430.7px;width:37px;overflow:hidden;color:#111">Mcx</div><div class="t cl" style="left:1295px;top:430.7px;width:67.5px;text-align:right;color:#111">5 064,00 $</div><div class="t cl" style="left:1366px;top:430.7px;width:56.5px;text-align:right;color:#111">0,00 $</div><div class="t cl" style="left:1426px;top:430.7px;width:56.0px;text-align:right;color:#111">0,00 $</div><div class="t cl" style="left:1485.5px;top:430.7px;width:58.5px;text-align:right;color:#111">0,00 %</div><div class="t cl" style="left:1547.5px;top:430.7px;width:72.5px;text-align:right;color:#111">12,00 $</div><div class="t cl" style="left:1623.5px;top:430.7px;width:84.5px;text-align:right;color:#111">5 064,00 $</div><div style="left:684px;top:429.0px;width:16.5px;height:19px;background:#f0f0f0;border:1px solid #b4b4b4;"></div><svg style="left:687.8px;top:434.0px;width:9px;height:9px" viewBox="0 0 9 9"><rect x="0.5" y="0.5" width="8" height="8" fill="#fff" stroke="#7d8cb8" stroke-width="1"/><path d="M2 4.5 H7 M4.5 2 V7" stroke="#000" stroke-width="1.1"/></svg><div style="left:770px;top:429.0px;width:16.5px;height:19px;background:#f0f0f0;border:1px solid #b4b4b4;"></div><svg style="left:773.8px;top:434.0px;width:9px;height:9px" viewBox="0 0 9 9"><rect x="0.5" y="0.5" width="8" height="8" fill="#fff" stroke="#7d8cb8" stroke-width="1"/><path d="M2 4.5 H7 M4.5 2 V7" stroke="#000" stroke-width="1.1"/></svg><div style="left:48px;top:448.5px;width:20px;height:20px;background:#f0f0f0;border-right:1px solid #8f8f8f;border-bottom:1px solid #8f8f8f;"></div><div style="left:68px;top:448.5px;width:1643.5px;height:20px;background:#fff;"></div><div style="left:68px;top:467.5px;width:1643.5px;height:1px;background:#e8e8e8;"></div><div style="left:146px;top:448.5px;width:1px;height:20px;background:#e6e6e6;"></div><div style="left:220px;top:448.5px;width:1px;height:20px;background:#e6e6e6;"></div><div style="left:702px;top:448.5px;width:1px;height:20px;background:#e6e6e6;"></div><div style="left:787px;top:448.5px;width:1px;height:20px;background:#e6e6e6;"></div><div style="left:839.5px;top:448.5px;width:1px;height:20px;background:#e6e6e6;"></div><div style="left:900px;top:448.5px;width:1px;height:20px;background:#e6e6e6;"></div><div style="left:939px;top:448.5px;width:1px;height:20px;background:#e6e6e6;"></div><div style="left:995px;top:448.5px;width:1px;height:20px;background:#e6e6e6;"></div><div style="left:1056px;top:448.5px;width:1px;height:20px;background:#e6e6e6;"></div><div style="left:1126.5px;top:448.5px;width:1px;height:20px;background:#e6e6e6;"></div><div style="left:1186.5px;top:448.5px;width:1px;height:20px;background:#e6e6e6;"></div><div style="left:1253px;top:448.5px;width:1px;height:20px;background:#e6e6e6;"></div><div style="left:1295px;top:448.5px;width:1px;height:20px;background:#e6e6e6;"></div><div style="left:1366px;top:448.5px;width:1px;height:20px;background:#e6e6e6;"></div><div style="left:1426px;top:448.5px;width:1px;height:20px;background:#e6e6e6;"></div><div style="left:1485.5px;top:448.5px;width:1px;height:20px;background:#e6e6e6;"></div><div style="left:1547.5px;top:448.5px;width:1px;height:20px;background:#e6e6e6;"></div><div style="left:1623.5px;top:448.5px;width:1px;height:20px;background:#e6e6e6;"></div><div style="left:81px;top:449.0px;width:16.5px;height:19px;background:#f0f0f0;border:1px solid #b4b4b4;"></div><svg style="left:84.8px;top:454.0px;width:9px;height:9px" viewBox="0 0 9 9"><rect x="0.5" y="0.5" width="8" height="8" fill="#fff" stroke="#7d8cb8" stroke-width="1"/><path d="M2 4.5 H7 M4.5 2 V7" stroke="#000" stroke-width="1.1"/></svg><div class="t cl" style="left:101.5px;top:450.7px;width:43px;overflow:hidden;color:#111">103507</div><div class="t cl" style="left:149.5px;top:450.7px;width:69px;overflow:hidden;color:#111">06M</div><div class="t cl" style="left:223.5px;top:450.7px;width:477px;overflow:hidden;color:#111">Épinette Traité Brun  2" x   6" x 12'</div><div class="t cl" style="left:705.5px;top:450.7px;width:65px;overflow:hidden;color:#111">Prix standard</div><div class="t cl" style="left:787px;top:450.7px;width:49.0px;text-align:right;color:#111">1,18</div><div class="t cl" style="left:839.5px;top:450.7px;width:57.0px;text-align:right;color:#111">3 636,00</div><div class="t cl" style="left:903.5px;top:450.7px;width:34px;overflow:hidden;color:#111">pi</div><div class="t cl" style="left:939px;top:450.7px;width:52.5px;text-align:right;color:#111">14,12 $</div><div class="t cl" style="left:995px;top:450.7px;width:57.5px;text-align:right;color:#111">296,92</div><div class="t cl" style="left:1056px;top:450.7px;width:67.0px;text-align:right;color:#111">2,05 %</div><div class="t cl" style="left:1126.5px;top:450.7px;width:56.5px;text-align:right;color:#111">6,08</div><div class="t cl" style="left:1186.5px;top:450.7px;width:63.0px;text-align:right;color:#111">303,00</div><div class="t cl" style="left:1256.5px;top:450.7px;width:37px;overflow:hidden;color:#111">unit</div><div class="t cl" style="left:1295px;top:450.7px;width:67.5px;text-align:right;color:#111">4 278,36 $</div><div class="t cl" style="left:1366px;top:450.7px;width:56.5px;text-align:right;color:#111">0,00 $</div><div class="t cl" style="left:1426px;top:450.7px;width:56.0px;text-align:right;color:#111">0,00 $</div><div class="t cl" style="left:1485.5px;top:450.7px;width:58.5px;text-align:right;color:#111">0,00 %</div><div class="t cl" style="left:1547.5px;top:450.7px;width:72.5px;text-align:right;color:#111">14,12 $</div><div class="t cl" style="left:1623.5px;top:450.7px;width:84.5px;text-align:right;color:#111">4 278,36 $</div><div style="left:684px;top:449.0px;width:16.5px;height:19px;background:#f0f0f0;border:1px solid #b4b4b4;"></div><svg style="left:687.8px;top:454.0px;width:9px;height:9px" viewBox="0 0 9 9"><rect x="0.5" y="0.5" width="8" height="8" fill="#fff" stroke="#7d8cb8" stroke-width="1"/><path d="M2 4.5 H7 M4.5 2 V7" stroke="#000" stroke-width="1.1"/></svg><div style="left:770px;top:449.0px;width:16.5px;height:19px;background:#f0f0f0;border:1px solid #b4b4b4;"></div><svg style="left:773.8px;top:454.0px;width:9px;height:9px" viewBox="0 0 9 9"><rect x="0.5" y="0.5" width="8" height="8" fill="#fff" stroke="#7d8cb8" stroke-width="1"/><path d="M2 4.5 H7 M4.5 2 V7" stroke="#000" stroke-width="1.1"/></svg><div style="left:48px;top:468.5px;width:20px;height:20px;background:#f0f0f0;border-right:1px solid #8f8f8f;border-bottom:1px solid #8f8f8f;"></div><div style="left:68px;top:468.5px;width:1643.5px;height:20px;background:#fff;"></div><div style="left:68px;top:487.5px;width:1643.5px;height:1px;background:#e8e8e8;"></div><div style="left:146px;top:468.5px;width:1px;height:20px;background:#e6e6e6;"></div><div style="left:220px;top:468.5px;width:1px;height:20px;background:#e6e6e6;"></div><div style="left:702px;top:468.5px;width:1px;height:20px;background:#e6e6e6;"></div><div style="left:787px;top:468.5px;width:1px;height:20px;background:#e6e6e6;"></div><div style="left:839.5px;top:468.5px;width:1px;height:20px;background:#e6e6e6;"></div><div style="left:900px;top:468.5px;width:1px;height:20px;background:#e6e6e6;"></div><div style="left:939px;top:468.5px;width:1px;height:20px;background:#e6e6e6;"></div><div style="left:995px;top:468.5px;width:1px;height:20px;background:#e6e6e6;"></div><div style="left:1056px;top:468.5px;width:1px;height:20px;background:#e6e6e6;"></div><div style="left:1126.5px;top:468.5px;width:1px;height:20px;background:#e6e6e6;"></div><div style="left:1186.5px;top:468.5px;width:1px;height:20px;background:#e6e6e6;"></div><div style="left:1253px;top:468.5px;width:1px;height:20px;background:#e6e6e6;"></div><div style="left:1295px;top:468.5px;width:1px;height:20px;background:#e6e6e6;"></div><div style="left:1366px;top:468.5px;width:1px;height:20px;background:#e6e6e6;"></div><div style="left:1426px;top:468.5px;width:1px;height:20px;background:#e6e6e6;"></div><div style="left:1485.5px;top:468.5px;width:1px;height:20px;background:#e6e6e6;"></div><div style="left:1547.5px;top:468.5px;width:1px;height:20px;background:#e6e6e6;"></div><div style="left:1623.5px;top:468.5px;width:1px;height:20px;background:#e6e6e6;"></div><div style="left:81px;top:469.0px;width:16.5px;height:19px;background:#f0f0f0;border:1px solid #b4b4b4;"></div><svg style="left:84.8px;top:474.0px;width:9px;height:9px" viewBox="0 0 9 9"><rect x="0.5" y="0.5" width="8" height="8" fill="#fff" stroke="#7d8cb8" stroke-width="1"/><path d="M2 4.5 H7 M4.5 2 V7" stroke="#000" stroke-width="1.1"/></svg><div class="t cl" style="left:101.5px;top:470.7px;width:43px;overflow:hidden;color:#111">107434</div><div class="t cl" style="left:149.5px;top:470.7px;width:69px;overflow:hidden;color:#111">09M</div><div class="t cl" style="left:223.5px;top:470.7px;width:477px;overflow:hidden;color:#111">Té Secondaire AX #AX224 2' CGC</div><div class="t cl" style="left:705.5px;top:470.7px;width:65px;overflow:hidden;color:#111">Prix standard</div><div class="t cl" style="left:787px;top:470.7px;width:49.0px;text-align:right;color:#111">2,50</div><div class="t cl" style="left:839.5px;top:470.7px;width:57.0px;text-align:right;color:#111">1 686,00</div><div class="t cl" style="left:903.5px;top:470.7px;width:34px;overflow:hidden;color:#111">pi</div><div class="t cl" style="left:939px;top:470.7px;width:52.5px;text-align:right;color:#111">5,00 $</div><div class="t cl" style="left:995px;top:470.7px;width:57.5px;text-align:right;color:#111">843,00</div><div class="t cl" style="left:1056px;top:470.7px;width:67.0px;text-align:right;color:#111">0,00 %</div><div class="t cl" style="left:1126.5px;top:470.7px;width:56.5px;text-align:right;color:#111">0,00</div><div class="t cl" style="left:1186.5px;top:470.7px;width:63.0px;text-align:right;color:#111">843,00</div><div class="t cl" style="left:1256.5px;top:470.7px;width:37px;overflow:hidden;color:#111">Mcx</div><div class="t cl" style="left:1295px;top:470.7px;width:67.5px;text-align:right;color:#111">4 215,00 $</div><div class="t cl" style="left:1366px;top:470.7px;width:56.5px;text-align:right;color:#111">0,00 $</div><div class="t cl" style="left:1426px;top:470.7px;width:56.0px;text-align:right;color:#111">0,00 $</div><div class="t cl" style="left:1485.5px;top:470.7px;width:58.5px;text-align:right;color:#111">0,00 %</div><div class="t cl" style="left:1547.5px;top:470.7px;width:72.5px;text-align:right;color:#111">5,00 $</div><div class="t cl" style="left:1623.5px;top:470.7px;width:84.5px;text-align:right;color:#111">4 215,00 $</div><div style="left:684px;top:469.0px;width:16.5px;height:19px;background:#f0f0f0;border:1px solid #b4b4b4;"></div><svg style="left:687.8px;top:474.0px;width:9px;height:9px" viewBox="0 0 9 9"><rect x="0.5" y="0.5" width="8" height="8" fill="#fff" stroke="#7d8cb8" stroke-width="1"/><path d="M2 4.5 H7 M4.5 2 V7" stroke="#000" stroke-width="1.1"/></svg><div style="left:770px;top:469.0px;width:16.5px;height:19px;background:#f0f0f0;border:1px solid #b4b4b4;"></div><svg style="left:773.8px;top:474.0px;width:9px;height:9px" viewBox="0 0 9 9"><rect x="0.5" y="0.5" width="8" height="8" fill="#fff" stroke="#7d8cb8" stroke-width="1"/><path d="M2 4.5 H7 M4.5 2 V7" stroke="#000" stroke-width="1.1"/></svg><div style="left:48px;top:488.5px;width:20px;height:20px;background:#f0f0f0;border-right:1px solid #8f8f8f;border-bottom:1px solid #8f8f8f;"></div><div style="left:68px;top:488.5px;width:1643.5px;height:20px;background:#fff;"></div><div style="left:68px;top:507.5px;width:1643.5px;height:1px;background:#e8e8e8;"></div><div style="left:146px;top:488.5px;width:1px;height:20px;background:#e6e6e6;"></div><div style="left:220px;top:488.5px;width:1px;height:20px;background:#e6e6e6;"></div><div style="left:702px;top:488.5px;width:1px;height:20px;background:#e6e6e6;"></div><div style="left:787px;top:488.5px;width:1px;height:20px;background:#e6e6e6;"></div><div style="left:839.5px;top:488.5px;width:1px;height:20px;background:#e6e6e6;"></div><div style="left:900px;top:488.5px;width:1px;height:20px;background:#e6e6e6;"></div><div style="left:939px;top:488.5px;width:1px;height:20px;background:#e6e6e6;"></div><div style="left:995px;top:488.5px;width:1px;height:20px;background:#e6e6e6;"></div><div style="left:1056px;top:488.5px;width:1px;height:20px;background:#e6e6e6;"></div><div style="left:1126.5px;top:488.5px;width:1px;height:20px;background:#e6e6e6;"></div><div style="left:1186.5px;top:488.5px;width:1px;height:20px;background:#e6e6e6;"></div><div style="left:1253px;top:488.5px;width:1px;height:20px;background:#e6e6e6;"></div><div style="left:1295px;top:488.5px;width:1px;height:20px;background:#e6e6e6;"></div><div style="left:1366px;top:488.5px;width:1px;height:20px;background:#e6e6e6;"></div><div style="left:1426px;top:488.5px;width:1px;height:20px;background:#e6e6e6;"></div><div style="left:1485.5px;top:488.5px;width:1px;height:20px;background:#e6e6e6;"></div><div style="left:1547.5px;top:488.5px;width:1px;height:20px;background:#e6e6e6;"></div><div style="left:1623.5px;top:488.5px;width:1px;height:20px;background:#e6e6e6;"></div><div style="left:81px;top:489.0px;width:16.5px;height:19px;background:#f0f0f0;border:1px solid #b4b4b4;"></div><svg style="left:84.8px;top:494.0px;width:9px;height:9px" viewBox="0 0 9 9"><rect x="0.5" y="0.5" width="8" height="8" fill="#fff" stroke="#7d8cb8" stroke-width="1"/><path d="M2 4.5 H7 M4.5 2 V7" stroke="#000" stroke-width="1.1"/></svg><div class="t cl" style="left:101.5px;top:490.7px;width:43px;overflow:hidden;color:#111">106985</div><div class="t cl" style="left:149.5px;top:490.7px;width:69px;overflow:hidden;color:#111">07M</div><div class="t cl" style="left:223.5px;top:490.7px;width:477px;overflow:hidden;color:#111">Tôle Murale Galv Cal 30 Muralic VicWest</div><div class="t cl" style="left:705.5px;top:490.7px;width:65px;overflow:hidden;color:#111">Prix standard</div><div class="t cl" style="left:787px;top:490.7px;width:49.0px;text-align:right;color:#111">2,00</div><div class="t cl" style="left:839.5px;top:490.7px;width:57.0px;text-align:right;color:#111">2 000,00</div><div class="t cl" style="left:903.5px;top:490.7px;width:34px;overflow:hidden;color:#111">pi2</div><div class="t cl" style="left:939px;top:490.7px;width:52.5px;text-align:right;color:#111">2,00 $</div><div class="t cl" style="left:995px;top:490.7px;width:57.5px;text-align:right;color:#111">2 000,00</div><div class="t cl" style="left:1056px;top:490.7px;width:67.0px;text-align:right;color:#111">0,00 %</div><div class="t cl" style="left:1126.5px;top:490.7px;width:56.5px;text-align:right;color:#111">0,00</div><div class="t cl" style="left:1186.5px;top:490.7px;width:63.0px;text-align:right;color:#111">2 000,00</div><div class="t cl" style="left:1256.5px;top:490.7px;width:37px;overflow:hidden;color:#111">Fls</div><div class="t cl" style="left:1295px;top:490.7px;width:67.5px;text-align:right;color:#111">4 000,00 $</div><div class="t cl" style="left:1366px;top:490.7px;width:56.5px;text-align:right;color:#111">0,00 $</div><div class="t cl" style="left:1426px;top:490.7px;width:56.0px;text-align:right;color:#111">0,00 $</div><div class="t cl" style="left:1485.5px;top:490.7px;width:58.5px;text-align:right;color:#111">0,00 %</div><div class="t cl" style="left:1547.5px;top:490.7px;width:72.5px;text-align:right;color:#111">2,00 $</div><div class="t cl" style="left:1623.5px;top:490.7px;width:84.5px;text-align:right;color:#111">4 000,00 $</div><div style="left:684px;top:489.0px;width:16.5px;height:19px;background:#f0f0f0;border:1px solid #b4b4b4;"></div><svg style="left:687.8px;top:494.0px;width:9px;height:9px" viewBox="0 0 9 9"><rect x="0.5" y="0.5" width="8" height="8" fill="#fff" stroke="#7d8cb8" stroke-width="1"/><path d="M2 4.5 H7 M4.5 2 V7" stroke="#000" stroke-width="1.1"/></svg><div style="left:770px;top:489.0px;width:16.5px;height:19px;background:#f0f0f0;border:1px solid #b4b4b4;"></div><svg style="left:773.8px;top:494.0px;width:9px;height:9px" viewBox="0 0 9 9"><rect x="0.5" y="0.5" width="8" height="8" fill="#fff" stroke="#7d8cb8" stroke-width="1"/><path d="M2 4.5 H7 M4.5 2 V7" stroke="#000" stroke-width="1.1"/></svg><div style="left:48px;top:508.5px;width:20px;height:20px;background:#f0f0f0;border-right:1px solid #8f8f8f;border-bottom:1px solid #8f8f8f;"></div><div style="left:68px;top:508.5px;width:1643.5px;height:20px;background:#fff;"></div><div style="left:68px;top:527.5px;width:1643.5px;height:1px;background:#e8e8e8;"></div><div style="left:146px;top:508.5px;width:1px;height:20px;background:#e6e6e6;"></div><div style="left:220px;top:508.5px;width:1px;height:20px;background:#e6e6e6;"></div><div style="left:702px;top:508.5px;width:1px;height:20px;background:#e6e6e6;"></div><div style="left:787px;top:508.5px;width:1px;height:20px;background:#e6e6e6;"></div><div style="left:839.5px;top:508.5px;width:1px;height:20px;background:#e6e6e6;"></div><div style="left:900px;top:508.5px;width:1px;height:20px;background:#e6e6e6;"></div><div style="left:939px;top:508.5px;width:1px;height:20px;background:#e6e6e6;"></div><div style="left:995px;top:508.5px;width:1px;height:20px;background:#e6e6e6;"></div><div style="left:1056px;top:508.5px;width:1px;height:20px;background:#e6e6e6;"></div><div style="left:1126.5px;top:508.5px;width:1px;height:20px;background:#e6e6e6;"></div><div style="left:1186.5px;top:508.5px;width:1px;height:20px;background:#e6e6e6;"></div><div style="left:1253px;top:508.5px;width:1px;height:20px;background:#e6e6e6;"></div><div style="left:1295px;top:508.5px;width:1px;height:20px;background:#e6e6e6;"></div><div style="left:1366px;top:508.5px;width:1px;height:20px;background:#e6e6e6;"></div><div style="left:1426px;top:508.5px;width:1px;height:20px;background:#e6e6e6;"></div><div style="left:1485.5px;top:508.5px;width:1px;height:20px;background:#e6e6e6;"></div><div style="left:1547.5px;top:508.5px;width:1px;height:20px;background:#e6e6e6;"></div><div style="left:1623.5px;top:508.5px;width:1px;height:20px;background:#e6e6e6;"></div><div style="left:81px;top:509.0px;width:16.5px;height:19px;background:#f0f0f0;border:1px solid #b4b4b4;"></div><svg style="left:84.8px;top:514.0px;width:9px;height:9px" viewBox="0 0 9 9"><rect x="0.5" y="0.5" width="8" height="8" fill="#fff" stroke="#7d8cb8" stroke-width="1"/><path d="M2 4.5 H7 M4.5 2 V7" stroke="#000" stroke-width="1.1"/></svg><div class="t cl" style="left:101.5px;top:510.7px;width:43px;overflow:hidden;color:#111">107906</div><div class="t cl" style="left:149.5px;top:510.7px;width:69px;overflow:hidden;color:#111">05M</div><div class="t cl" style="left:223.5px;top:510.7px;width:477px;overflow:hidden;color:#111">Treillis Métallique 8' x 20' [Calibre]  [Nuance]</div><div class="t cl" style="left:705.5px;top:510.7px;width:65px;overflow:hidden;color:#111">Prix standard</div><div class="t cl" style="left:787px;top:510.7px;width:49.0px;text-align:right;color:#111">1,00</div><div class="t cl" style="left:839.5px;top:510.7px;width:57.0px;text-align:right;color:#111">3 360,00</div><div class="t cl" style="left:903.5px;top:510.7px;width:34px;overflow:hidden;color:#111">pi2</div><div class="t cl" style="left:939px;top:510.7px;width:52.5px;text-align:right;color:#111">160,00 $</div><div class="t cl" style="left:995px;top:510.7px;width:57.5px;text-align:right;color:#111">20,63</div><div class="t cl" style="left:1056px;top:510.7px;width:67.0px;text-align:right;color:#111">1,82 %</div><div class="t cl" style="left:1126.5px;top:510.7px;width:56.5px;text-align:right;color:#111">0,38</div><div class="t cl" style="left:1186.5px;top:510.7px;width:63.0px;text-align:right;color:#111">21,00</div><div class="t cl" style="left:1256.5px;top:510.7px;width:37px;overflow:hidden;color:#111">Fls</div><div class="t cl" style="left:1295px;top:510.7px;width:67.5px;text-align:right;color:#111">3 360,00 $</div><div class="t cl" style="left:1366px;top:510.7px;width:56.5px;text-align:right;color:#111">0,00 $</div><div class="t cl" style="left:1426px;top:510.7px;width:56.0px;text-align:right;color:#111">0,00 $</div><div class="t cl" style="left:1485.5px;top:510.7px;width:58.5px;text-align:right;color:#111">0,00 %</div><div class="t cl" style="left:1547.5px;top:510.7px;width:72.5px;text-align:right;color:#111">160,00 $</div><div class="t cl" style="left:1623.5px;top:510.7px;width:84.5px;text-align:right;color:#111">3 360,00 $</div><div style="left:684px;top:509.0px;width:16.5px;height:19px;background:#f0f0f0;border:1px solid #b4b4b4;"></div><svg style="left:687.8px;top:514.0px;width:9px;height:9px" viewBox="0 0 9 9"><rect x="0.5" y="0.5" width="8" height="8" fill="#fff" stroke="#7d8cb8" stroke-width="1"/><path d="M2 4.5 H7 M4.5 2 V7" stroke="#000" stroke-width="1.1"/></svg><div style="left:770px;top:509.0px;width:16.5px;height:19px;background:#f0f0f0;border:1px solid #b4b4b4;"></div><svg style="left:773.8px;top:514.0px;width:9px;height:9px" viewBox="0 0 9 9"><rect x="0.5" y="0.5" width="8" height="8" fill="#fff" stroke="#7d8cb8" stroke-width="1"/><path d="M2 4.5 H7 M4.5 2 V7" stroke="#000" stroke-width="1.1"/></svg><div style="left:48px;top:528.5px;width:20px;height:20px;background:#f0f0f0;border-right:1px solid #8f8f8f;border-bottom:1px solid #8f8f8f;"></div><div style="left:68px;top:528.5px;width:1643.5px;height:20px;background:#fff;"></div><div style="left:68px;top:547.5px;width:1643.5px;height:1px;background:#e8e8e8;"></div><div style="left:146px;top:528.5px;width:1px;height:20px;background:#e6e6e6;"></div><div style="left:220px;top:528.5px;width:1px;height:20px;background:#e6e6e6;"></div><div style="left:702px;top:528.5px;width:1px;height:20px;background:#e6e6e6;"></div><div style="left:787px;top:528.5px;width:1px;height:20px;background:#e6e6e6;"></div><div style="left:839.5px;top:528.5px;width:1px;height:20px;background:#e6e6e6;"></div><div style="left:900px;top:528.5px;width:1px;height:20px;background:#e6e6e6;"></div><div style="left:939px;top:528.5px;width:1px;height:20px;background:#e6e6e6;"></div><div style="left:995px;top:528.5px;width:1px;height:20px;background:#e6e6e6;"></div><div style="left:1056px;top:528.5px;width:1px;height:20px;background:#e6e6e6;"></div><div style="left:1126.5px;top:528.5px;width:1px;height:20px;background:#e6e6e6;"></div><div style="left:1186.5px;top:528.5px;width:1px;height:20px;background:#e6e6e6;"></div><div style="left:1253px;top:528.5px;width:1px;height:20px;background:#e6e6e6;"></div><div style="left:1295px;top:528.5px;width:1px;height:20px;background:#e6e6e6;"></div><div style="left:1366px;top:528.5px;width:1px;height:20px;background:#e6e6e6;"></div><div style="left:1426px;top:528.5px;width:1px;height:20px;background:#e6e6e6;"></div><div style="left:1485.5px;top:528.5px;width:1px;height:20px;background:#e6e6e6;"></div><div style="left:1547.5px;top:528.5px;width:1px;height:20px;background:#e6e6e6;"></div><div style="left:1623.5px;top:528.5px;width:1px;height:20px;background:#e6e6e6;"></div><div style="left:81px;top:529.0px;width:16.5px;height:19px;background:#f0f0f0;border:1px solid #b4b4b4;"></div><svg style="left:84.8px;top:534.0px;width:9px;height:9px" viewBox="0 0 9 9"><rect x="0.5" y="0.5" width="8" height="8" fill="#fff" stroke="#7d8cb8" stroke-width="1"/><path d="M2 4.5 H7 M4.5 2 V7" stroke="#000" stroke-width="1.1"/></svg><div class="t cl" style="left:101.5px;top:530.7px;width:43px;overflow:hidden;color:#111">106759</div><div class="t cl" style="left:149.5px;top:530.7px;width:69px;overflow:hidden;color:#111">09M</div><div class="t cl" style="left:223.5px;top:530.7px;width:477px;overflow:hidden;color:#111">Gypse régulier 1/2" x 4' x 12'</div><div class="t cl" style="left:705.5px;top:530.7px;width:65px;overflow:hidden;color:#111">Prix standard</div><div class="t cl" style="left:787px;top:530.7px;width:49.0px;text-align:right;color:#111">0,30</div><div class="t cl" style="left:839.5px;top:530.7px;width:57.0px;text-align:right;color:#111">9 360,00</div><div class="t cl" style="left:903.5px;top:530.7px;width:34px;overflow:hidden;color:#111">pi2</div><div class="t cl" style="left:939px;top:530.7px;width:52.5px;text-align:right;color:#111">14,60 $</div><div class="t cl" style="left:995px;top:530.7px;width:57.5px;text-align:right;color:#111">193,67</div><div class="t cl" style="left:1056px;top:530.7px;width:67.0px;text-align:right;color:#111">0,69 %</div><div class="t cl" style="left:1126.5px;top:530.7px;width:56.5px;text-align:right;color:#111">1,33</div><div class="t cl" style="left:1186.5px;top:530.7px;width:63.0px;text-align:right;color:#111">195,00</div><div class="t cl" style="left:1256.5px;top:530.7px;width:37px;overflow:hidden;color:#111">Fls</div><div class="t cl" style="left:1295px;top:530.7px;width:67.5px;text-align:right;color:#111">2 847,00 $</div><div class="t cl" style="left:1366px;top:530.7px;width:56.5px;text-align:right;color:#111">0,00 $</div><div class="t cl" style="left:1426px;top:530.7px;width:56.0px;text-align:right;color:#111">0,00 $</div><div class="t cl" style="left:1485.5px;top:530.7px;width:58.5px;text-align:right;color:#111">0,00 %</div><div class="t cl" style="left:1547.5px;top:530.7px;width:72.5px;text-align:right;color:#111">14,60 $</div><div class="t cl" style="left:1623.5px;top:530.7px;width:84.5px;text-align:right;color:#111">2 847,00 $</div><div style="left:684px;top:529.0px;width:16.5px;height:19px;background:#f0f0f0;border:1px solid #b4b4b4;"></div><svg style="left:687.8px;top:534.0px;width:9px;height:9px" viewBox="0 0 9 9"><rect x="0.5" y="0.5" width="8" height="8" fill="#fff" stroke="#7d8cb8" stroke-width="1"/><path d="M2 4.5 H7 M4.5 2 V7" stroke="#000" stroke-width="1.1"/></svg><div style="left:770px;top:529.0px;width:16.5px;height:19px;background:#f0f0f0;border:1px solid #b4b4b4;"></div><svg style="left:773.8px;top:534.0px;width:9px;height:9px" viewBox="0 0 9 9"><rect x="0.5" y="0.5" width="8" height="8" fill="#fff" stroke="#7d8cb8" stroke-width="1"/><path d="M2 4.5 H7 M4.5 2 V7" stroke="#000" stroke-width="1.1"/></svg><div style="left:48px;top:548.5px;width:20px;height:20px;background:#f0f0f0;border-right:1px solid #8f8f8f;border-bottom:1px solid #8f8f8f;"></div><div style="left:68px;top:548.5px;width:1643.5px;height:20px;background:#fff;"></div><div style="left:68px;top:567.5px;width:1643.5px;height:1px;background:#e8e8e8;"></div><div style="left:146px;top:548.5px;width:1px;height:20px;background:#e6e6e6;"></div><div style="left:220px;top:548.5px;width:1px;height:20px;background:#e6e6e6;"></div><div style="left:702px;top:548.5px;width:1px;height:20px;background:#e6e6e6;"></div><div style="left:787px;top:548.5px;width:1px;height:20px;background:#e6e6e6;"></div><div style="left:839.5px;top:548.5px;width:1px;height:20px;background:#e6e6e6;"></div><div style="left:900px;top:548.5px;width:1px;height:20px;background:#e6e6e6;"></div><div style="left:939px;top:548.5px;width:1px;height:20px;background:#e6e6e6;"></div><div style="left:995px;top:548.5px;width:1px;height:20px;background:#e6e6e6;"></div><div style="left:1056px;top:548.5px;width:1px;height:20px;background:#e6e6e6;"></div><div style="left:1126.5px;top:548.5px;width:1px;height:20px;background:#e6e6e6;"></div><div style="left:1186.5px;top:548.5px;width:1px;height:20px;background:#e6e6e6;"></div><div style="left:1253px;top:548.5px;width:1px;height:20px;background:#e6e6e6;"></div><div style="left:1295px;top:548.5px;width:1px;height:20px;background:#e6e6e6;"></div><div style="left:1366px;top:548.5px;width:1px;height:20px;background:#e6e6e6;"></div><div style="left:1426px;top:548.5px;width:1px;height:20px;background:#e6e6e6;"></div><div style="left:1485.5px;top:548.5px;width:1px;height:20px;background:#e6e6e6;"></div><div style="left:1547.5px;top:548.5px;width:1px;height:20px;background:#e6e6e6;"></div><div style="left:1623.5px;top:548.5px;width:1px;height:20px;background:#e6e6e6;"></div><div style="left:81px;top:549.0px;width:16.5px;height:19px;background:#f0f0f0;border:1px solid #b4b4b4;"></div><svg style="left:84.8px;top:554.0px;width:9px;height:9px" viewBox="0 0 9 9"><rect x="0.5" y="0.5" width="8" height="8" fill="#fff" stroke="#7d8cb8" stroke-width="1"/><path d="M2 4.5 H7 M4.5 2 V7" stroke="#000" stroke-width="1.1"/></svg><div class="t cl" style="left:101.5px;top:550.7px;width:43px;overflow:hidden;color:#111">103884</div><div class="t cl" style="left:149.5px;top:550.7px;width:69px;overflow:hidden;color:#111">06M</div><div class="t cl" style="left:223.5px;top:550.7px;width:477px;overflow:hidden;color:#111">Aspenite No 1 Carré 19/32" x 4' x 8'</div><div class="t cl" style="left:705.5px;top:550.7px;width:65px;overflow:hidden;color:#111">Prix standard</div><div class="t cl" style="left:1366px;top:550.7px;width:56.5px;text-align:right;color:#111">0,00 $</div><div class="t cl" style="left:1426px;top:550.7px;width:56.0px;text-align:right;color:#111">0,00 $</div><div class="t cl" style="left:1485.5px;top:550.7px;width:58.5px;text-align:right;color:#111">0,00 %</div><div class="t cl" style="left:1547.5px;top:550.7px;width:72.5px;text-align:right;color:#111">22,99 $</div><div class="t cl" style="left:1623.5px;top:550.7px;width:84.5px;text-align:right;color:#111">2 505,91 $</div><div style="left:684px;top:549.0px;width:16.5px;height:19px;background:#f0f0f0;border:1px solid #b4b4b4;"></div><svg style="left:687.8px;top:554.0px;width:9px;height:9px" viewBox="0 0 9 9"><rect x="0.5" y="0.5" width="8" height="8" fill="#fff" stroke="#7d8cb8" stroke-width="1"/><path d="M2 4.5 H7 M4.5 2 V7" stroke="#000" stroke-width="1.1"/></svg><div style="left:770px;top:549.0px;width:16.5px;height:19px;background:#f0f0f0;border:1px solid #b4b4b4;"></div><svg style="left:773.8px;top:554.0px;width:9px;height:9px" viewBox="0 0 9 9"><rect x="0.5" y="0.5" width="8" height="8" fill="#fff" stroke="#7d8cb8" stroke-width="1"/><path d="M2 4.5 H7 M4.5 2 V7" stroke="#000" stroke-width="1.1"/></svg><div style="left:48px;top:568.5px;width:20px;height:20px;background:#f0f0f0;border-right:1px solid #8f8f8f;border-bottom:1px solid #8f8f8f;"></div><div style="left:68px;top:568.5px;width:1643.5px;height:20px;background:#fff;"></div><div style="left:68px;top:587.5px;width:1643.5px;height:1px;background:#e8e8e8;"></div><div style="left:146px;top:568.5px;width:1px;height:20px;background:#e6e6e6;"></div><div style="left:220px;top:568.5px;width:1px;height:20px;background:#e6e6e6;"></div><div style="left:702px;top:568.5px;width:1px;height:20px;background:#e6e6e6;"></div><div style="left:787px;top:568.5px;width:1px;height:20px;background:#e6e6e6;"></div><div style="left:839.5px;top:568.5px;width:1px;height:20px;background:#e6e6e6;"></div><div style="left:900px;top:568.5px;width:1px;height:20px;background:#e6e6e6;"></div><div style="left:939px;top:568.5px;width:1px;height:20px;background:#e6e6e6;"></div><div style="left:995px;top:568.5px;width:1px;height:20px;background:#e6e6e6;"></div><div style="left:1056px;top:568.5px;width:1px;height:20px;background:#e6e6e6;"></div><div style="left:1126.5px;top:568.5px;width:1px;height:20px;background:#e6e6e6;"></div><div style="left:1186.5px;top:568.5px;width:1px;height:20px;background:#e6e6e6;"></div><div style="left:1253px;top:568.5px;width:1px;height:20px;background:#e6e6e6;"></div><div style="left:1295px;top:568.5px;width:1px;height:20px;background:#e6e6e6;"></div><div style="left:1366px;top:568.5px;width:1px;height:20px;background:#e6e6e6;"></div><div style="left:1426px;top:568.5px;width:1px;height:20px;background:#e6e6e6;"></div><div style="left:1485.5px;top:568.5px;width:1px;height:20px;background:#e6e6e6;"></div><div style="left:1547.5px;top:568.5px;width:1px;height:20px;background:#e6e6e6;"></div><div style="left:1623.5px;top:568.5px;width:1px;height:20px;background:#e6e6e6;"></div><div style="left:81px;top:569.0px;width:16.5px;height:19px;background:#f0f0f0;border:1px solid #b4b4b4;"></div><svg style="left:84.8px;top:574.0px;width:9px;height:9px" viewBox="0 0 9 9"><rect x="0.5" y="0.5" width="8" height="8" fill="#fff" stroke="#7d8cb8" stroke-width="1"/><path d="M2 4.5 H7 M4.5 2 V7" stroke="#000" stroke-width="1.1"/></svg><div class="t cl" style="left:101.5px;top:570.7px;width:43px;overflow:hidden;color:#111">103248</div><div class="t cl" style="left:149.5px;top:570.7px;width:69px;overflow:hidden;color:#111">03M</div><div class="t cl" style="left:223.5px;top:570.7px;width:477px;overflow:hidden;color:#111">Béton 25 Mpa G20 (m3)</div><div class="t cl" style="left:705.5px;top:570.7px;width:65px;overflow:hidden;color:#111">Prix standard</div><div class="t cl" style="left:1366px;top:570.7px;width:56.5px;text-align:right;color:#111">0,00 $</div><div class="t cl" style="left:1426px;top:570.7px;width:56.0px;text-align:right;color:#111">0,00 $</div><div class="t cl" style="left:1485.5px;top:570.7px;width:58.5px;text-align:right;color:#111">0,00 %</div><div class="t cl" style="left:1547.5px;top:570.7px;width:72.5px;text-align:right;color:#111">100,00 $</div><div class="t cl" style="left:1623.5px;top:570.7px;width:84.5px;text-align:right;color:#111">2 200,00 $</div><div style="left:684px;top:569.0px;width:16.5px;height:19px;background:#f0f0f0;border:1px solid #b4b4b4;"></div><svg style="left:687.8px;top:574.0px;width:9px;height:9px" viewBox="0 0 9 9"><rect x="0.5" y="0.5" width="8" height="8" fill="#fff" stroke="#7d8cb8" stroke-width="1"/><path d="M2 4.5 H7 M4.5 2 V7" stroke="#000" stroke-width="1.1"/></svg><div style="left:770px;top:569.0px;width:16.5px;height:19px;background:#f0f0f0;border:1px solid #b4b4b4;"></div><svg style="left:773.8px;top:574.0px;width:9px;height:9px" viewBox="0 0 9 9"><rect x="0.5" y="0.5" width="8" height="8" fill="#fff" stroke="#7d8cb8" stroke-width="1"/><path d="M2 4.5 H7 M4.5 2 V7" stroke="#000" stroke-width="1.1"/></svg><div style="left:48px;top:588.5px;width:20px;height:20px;background:#f0f0f0;border-right:1px solid #8f8f8f;border-bottom:1px solid #8f8f8f;"></div><div style="left:68px;top:588.5px;width:1643.5px;height:20px;background:#fff;"></div><div style="left:68px;top:607.5px;width:1643.5px;height:1px;background:#e8e8e8;"></div><div style="left:146px;top:588.5px;width:1px;height:20px;background:#e6e6e6;"></div><div style="left:220px;top:588.5px;width:1px;height:20px;background:#e6e6e6;"></div><div style="left:702px;top:588.5px;width:1px;height:20px;background:#e6e6e6;"></div><div style="left:787px;top:588.5px;width:1px;height:20px;background:#e6e6e6;"></div><div style="left:839.5px;top:588.5px;width:1px;height:20px;background:#e6e6e6;"></div><div style="left:900px;top:588.5px;width:1px;height:20px;background:#e6e6e6;"></div><div style="left:939px;top:588.5px;width:1px;height:20px;background:#e6e6e6;"></div><div style="left:995px;top:588.5px;width:1px;height:20px;background:#e6e6e6;"></div><div style="left:1056px;top:588.5px;width:1px;height:20px;background:#e6e6e6;"></div><div style="left:1126.5px;top:588.5px;width:1px;height:20px;background:#e6e6e6;"></div><div style="left:1186.5px;top:588.5px;width:1px;height:20px;background:#e6e6e6;"></div><div style="left:1253px;top:588.5px;width:1px;height:20px;background:#e6e6e6;"></div><div style="left:1295px;top:588.5px;width:1px;height:20px;background:#e6e6e6;"></div><div style="left:1366px;top:588.5px;width:1px;height:20px;background:#e6e6e6;"></div><div style="left:1426px;top:588.5px;width:1px;height:20px;background:#e6e6e6;"></div><div style="left:1485.5px;top:588.5px;width:1px;height:20px;background:#e6e6e6;"></div><div style="left:1547.5px;top:588.5px;width:1px;height:20px;background:#e6e6e6;"></div><div style="left:1623.5px;top:588.5px;width:1px;height:20px;background:#e6e6e6;"></div><div style="left:81px;top:589.0px;width:16.5px;height:19px;background:#f0f0f0;border:1px solid #b4b4b4;"></div><svg style="left:84.8px;top:594.0px;width:9px;height:9px" viewBox="0 0 9 9"><rect x="0.5" y="0.5" width="8" height="8" fill="#fff" stroke="#7d8cb8" stroke-width="1"/><path d="M2 4.5 H7 M4.5 2 V7" stroke="#000" stroke-width="1.1"/></svg><div class="t cl" style="left:101.5px;top:590.7px;width:43px;overflow:hidden;color:#111">106707</div><div class="t cl" style="left:149.5px;top:590.7px;width:69px;overflow:hidden;color:#111">06M</div><div class="t cl" style="left:223.5px;top:590.7px;width:477px;overflow:hidden;color:#111">Contre-plaqué BC Fir Sélect t&amp;g</div><div class="t cl" style="left:705.5px;top:590.7px;width:65px;overflow:hidden;color:#111">Prix standard</div><div class="t cl" style="left:1366px;top:590.7px;width:56.5px;text-align:right;color:#111">0,00 $</div><div class="t cl" style="left:1426px;top:590.7px;width:56.0px;text-align:right;color:#111">0,00 $</div><div class="t cl" style="left:1485.5px;top:590.7px;width:58.5px;text-align:right;color:#111">0,00 %</div><div class="t cl" style="left:1547.5px;top:590.7px;width:72.5px;text-align:right;color:#111">51,96 $</div><div class="t cl" style="left:1623.5px;top:590.7px;width:84.5px;text-align:right;color:#111">2 182,32 $</div><div style="left:684px;top:589.0px;width:16.5px;height:19px;background:#f0f0f0;border:1px solid #b4b4b4;"></div><svg style="left:687.8px;top:594.0px;width:9px;height:9px" viewBox="0 0 9 9"><rect x="0.5" y="0.5" width="8" height="8" fill="#fff" stroke="#7d8cb8" stroke-width="1"/><path d="M2 4.5 H7 M4.5 2 V7" stroke="#000" stroke-width="1.1"/></svg><div style="left:770px;top:589.0px;width:16.5px;height:19px;background:#f0f0f0;border:1px solid #b4b4b4;"></div><svg style="left:773.8px;top:594.0px;width:9px;height:9px" viewBox="0 0 9 9"><rect x="0.5" y="0.5" width="8" height="8" fill="#fff" stroke="#7d8cb8" stroke-width="1"/><path d="M2 4.5 H7 M4.5 2 V7" stroke="#000" stroke-width="1.1"/></svg><div style="left:48px;top:608.5px;width:20px;height:20px;background:#f0f0f0;border-right:1px solid #8f8f8f;border-bottom:1px solid #8f8f8f;"></div><div style="left:68px;top:608.5px;width:1643.5px;height:20px;background:#fff;"></div><div style="left:68px;top:627.5px;width:1643.5px;height:1px;background:#e8e8e8;"></div><div style="left:146px;top:608.5px;width:1px;height:20px;background:#e6e6e6;"></div><div style="left:220px;top:608.5px;width:1px;height:20px;background:#e6e6e6;"></div><div style="left:702px;top:608.5px;width:1px;height:20px;background:#e6e6e6;"></div><div style="left:787px;top:608.5px;width:1px;height:20px;background:#e6e6e6;"></div><div style="left:839.5px;top:608.5px;width:1px;height:20px;background:#e6e6e6;"></div><div style="left:900px;top:608.5px;width:1px;height:20px;background:#e6e6e6;"></div><div style="left:939px;top:608.5px;width:1px;height:20px;background:#e6e6e6;"></div><div style="left:995px;top:608.5px;width:1px;height:20px;background:#e6e6e6;"></div><div style="left:1056px;top:608.5px;width:1px;height:20px;background:#e6e6e6;"></div><div style="left:1126.5px;top:608.5px;width:1px;height:20px;background:#e6e6e6;"></div><div style="left:1186.5px;top:608.5px;width:1px;height:20px;background:#e6e6e6;"></div><div style="left:1253px;top:608.5px;width:1px;height:20px;background:#e6e6e6;"></div><div style="left:1295px;top:608.5px;width:1px;height:20px;background:#e6e6e6;"></div><div style="left:1366px;top:608.5px;width:1px;height:20px;background:#e6e6e6;"></div><div style="left:1426px;top:608.5px;width:1px;height:20px;background:#e6e6e6;"></div><div style="left:1485.5px;top:608.5px;width:1px;height:20px;background:#e6e6e6;"></div><div style="left:1547.5px;top:608.5px;width:1px;height:20px;background:#e6e6e6;"></div><div style="left:1623.5px;top:608.5px;width:1px;height:20px;background:#e6e6e6;"></div><div style="left:81px;top:609.0px;width:16.5px;height:19px;background:#f0f0f0;border:1px solid #b4b4b4;"></div><svg style="left:84.8px;top:614.0px;width:9px;height:9px" viewBox="0 0 9 9"><rect x="0.5" y="0.5" width="8" height="8" fill="#fff" stroke="#7d8cb8" stroke-width="1"/><path d="M2 4.5 H7 M4.5 2 V7" stroke="#000" stroke-width="1.1"/></svg><div class="t cl" style="left:101.5px;top:610.7px;width:43px;overflow:hidden;color:#111">102191</div><div class="t cl" style="left:149.5px;top:610.7px;width:69px;overflow:hidden;color:#111">06M</div><div class="t cl" style="left:223.5px;top:610.7px;width:477px;overflow:hidden;color:#111">Épinette Rég   1" x  4" x 12' La</div><div class="t cl" style="left:705.5px;top:610.7px;width:65px;overflow:hidden;color:#111">Prix standard</div><div class="t cl" style="left:1366px;top:610.7px;width:56.5px;text-align:right;color:#111">0,00 $</div><div class="t cl" style="left:1426px;top:610.7px;width:56.0px;text-align:right;color:#111">0,00 $</div><div class="t cl" style="left:1485.5px;top:610.7px;width:58.5px;text-align:right;color:#111">0,00 %</div><div class="t cl" style="left:1547.5px;top:610.7px;width:72.5px;text-align:right;color:#111">2,74 $</div><div class="t cl" style="left:1623.5px;top:610.7px;width:84.5px;text-align:right;color:#111">2 011,16 $</div><div style="left:684px;top:609.0px;width:16.5px;height:19px;background:#f0f0f0;border:1px solid #b4b4b4;"></div><svg style="left:687.8px;top:614.0px;width:9px;height:9px" viewBox="0 0 9 9"><rect x="0.5" y="0.5" width="8" height="8" fill="#fff" stroke="#7d8cb8" stroke-width="1"/><path d="M2 4.5 H7 M4.5 2 V7" stroke="#000" stroke-width="1.1"/></svg><div style="left:770px;top:609.0px;width:16.5px;height:19px;background:#f0f0f0;border:1px solid #b4b4b4;"></div><svg style="left:773.8px;top:614.0px;width:9px;height:9px" viewBox="0 0 9 9"><rect x="0.5" y="0.5" width="8" height="8" fill="#fff" stroke="#7d8cb8" stroke-width="1"/><path d="M2 4.5 H7 M4.5 2 V7" stroke="#000" stroke-width="1.1"/></svg><div style="left:48px;top:628.5px;width:20px;height:20px;background:#f0f0f0;border-right:1px solid #8f8f8f;border-bottom:1px solid #8f8f8f;"></div><div style="left:68px;top:628.5px;width:1643.5px;height:20px;background:#fff;"></div><div style="left:68px;top:647.5px;width:1643.5px;height:1px;background:#e8e8e8;"></div><div style="left:146px;top:628.5px;width:1px;height:20px;background:#e6e6e6;"></div><div style="left:220px;top:628.5px;width:1px;height:20px;background:#e6e6e6;"></div><div style="left:702px;top:628.5px;width:1px;height:20px;background:#e6e6e6;"></div><div style="left:787px;top:628.5px;width:1px;height:20px;background:#e6e6e6;"></div><div style="left:839.5px;top:628.5px;width:1px;height:20px;background:#e6e6e6;"></div><div style="left:900px;top:628.5px;width:1px;height:20px;background:#e6e6e6;"></div><div style="left:939px;top:628.5px;width:1px;height:20px;background:#e6e6e6;"></div><div style="left:995px;top:628.5px;width:1px;height:20px;background:#e6e6e6;"></div><div style="left:1056px;top:628.5px;width:1px;height:20px;background:#e6e6e6;"></div><div style="left:1126.5px;top:628.5px;width:1px;height:20px;background:#e6e6e6;"></div><div style="left:1186.5px;top:628.5px;width:1px;height:20px;background:#e6e6e6;"></div><div style="left:1253px;top:628.5px;width:1px;height:20px;background:#e6e6e6;"></div><div style="left:1295px;top:628.5px;width:1px;height:20px;background:#e6e6e6;"></div><div style="left:1366px;top:628.5px;width:1px;height:20px;background:#e6e6e6;"></div><div style="left:1426px;top:628.5px;width:1px;height:20px;background:#e6e6e6;"></div><div style="left:1485.5px;top:628.5px;width:1px;height:20px;background:#e6e6e6;"></div><div style="left:1547.5px;top:628.5px;width:1px;height:20px;background:#e6e6e6;"></div><div style="left:1623.5px;top:628.5px;width:1px;height:20px;background:#e6e6e6;"></div><div style="left:81px;top:629.0px;width:16.5px;height:19px;background:#f0f0f0;border:1px solid #b4b4b4;"></div><svg style="left:84.8px;top:634.0px;width:9px;height:9px" viewBox="0 0 9 9"><rect x="0.5" y="0.5" width="8" height="8" fill="#fff" stroke="#7d8cb8" stroke-width="1"/><path d="M2 4.5 H7 M4.5 2 V7" stroke="#000" stroke-width="1.1"/></svg><div class="t cl" style="left:101.5px;top:630.7px;width:43px;overflow:hidden;color:#111">103352</div><div class="t cl" style="left:149.5px;top:630.7px;width:69px;overflow:hidden;color:#111">07M</div><div class="t cl" style="left:223.5px;top:630.7px;width:477px;overflow:hidden;color:#111">Panneau Isolant Isoclad Carré</div><div class="t cl" style="left:705.5px;top:630.7px;width:65px;overflow:hidden;color:#111">Prix standard</div><div class="t cl" style="left:1366px;top:630.7px;width:56.5px;text-align:right;color:#111">0,00 $</div><div class="t cl" style="left:1426px;top:630.7px;width:56.0px;text-align:right;color:#111">0,00 $</div><div class="t cl" style="left:1485.5px;top:630.7px;width:58.5px;text-align:right;color:#111">0,00 %</div><div class="t cl" style="left:1547.5px;top:630.7px;width:72.5px;text-align:right;color:#111">26,99 $</div><div class="t cl" style="left:1623.5px;top:630.7px;width:84.5px;text-align:right;color:#111">1 754,35 $</div><div style="left:684px;top:629.0px;width:16.5px;height:19px;background:#f0f0f0;border:1px solid #b4b4b4;"></div><svg style="left:687.8px;top:634.0px;width:9px;height:9px" viewBox="0 0 9 9"><rect x="0.5" y="0.5" width="8" height="8" fill="#fff" stroke="#7d8cb8" stroke-width="1"/><path d="M2 4.5 H7 M4.5 2 V7" stroke="#000" stroke-width="1.1"/></svg><div style="left:770px;top:629.0px;width:16.5px;height:19px;background:#f0f0f0;border:1px solid #b4b4b4;"></div><svg style="left:773.8px;top:634.0px;width:9px;height:9px" viewBox="0 0 9 9"><rect x="0.5" y="0.5" width="8" height="8" fill="#fff" stroke="#7d8cb8" stroke-width="1"/><path d="M2 4.5 H7 M4.5 2 V7" stroke="#000" stroke-width="1.1"/></svg><div style="left:48px;top:648.5px;width:20px;height:20px;background:#f0f0f0;border-right:1px solid #8f8f8f;border-bottom:1px solid #8f8f8f;"></div><div style="left:68px;top:648.5px;width:1643.5px;height:20px;background:#fff;"></div><div style="left:68px;top:667.5px;width:1643.5px;height:1px;background:#e8e8e8;"></div><div style="left:146px;top:648.5px;width:1px;height:20px;background:#e6e6e6;"></div><div style="left:220px;top:648.5px;width:1px;height:20px;background:#e6e6e6;"></div><div style="left:702px;top:648.5px;width:1px;height:20px;background:#e6e6e6;"></div><div style="left:787px;top:648.5px;width:1px;height:20px;background:#e6e6e6;"></div><div style="left:839.5px;top:648.5px;width:1px;height:20px;background:#e6e6e6;"></div><div style="left:900px;top:648.5px;width:1px;height:20px;background:#e6e6e6;"></div><div style="left:939px;top:648.5px;width:1px;height:20px;background:#e6e6e6;"></div><div style="left:995px;top:648.5px;width:1px;height:20px;background:#e6e6e6;"></div><div style="left:1056px;top:648.5px;width:1px;height:20px;background:#e6e6e6;"></div><div style="left:1126.5px;top:648.5px;width:1px;height:20px;background:#e6e6e6;"></div><div style="left:1186.5px;top:648.5px;width:1px;height:20px;background:#e6e6e6;"></div><div style="left:1253px;top:648.5px;width:1px;height:20px;background:#e6e6e6;"></div><div style="left:1295px;top:648.5px;width:1px;height:20px;background:#e6e6e6;"></div><div style="left:1366px;top:648.5px;width:1px;height:20px;background:#e6e6e6;"></div><div style="left:1426px;top:648.5px;width:1px;height:20px;background:#e6e6e6;"></div><div style="left:1485.5px;top:648.5px;width:1px;height:20px;background:#e6e6e6;"></div><div style="left:1547.5px;top:648.5px;width:1px;height:20px;background:#e6e6e6;"></div><div style="left:1623.5px;top:648.5px;width:1px;height:20px;background:#e6e6e6;"></div><div style="left:81px;top:649.0px;width:16.5px;height:19px;background:#f0f0f0;border:1px solid #b4b4b4;"></div><svg style="left:84.8px;top:654.0px;width:9px;height:9px" viewBox="0 0 9 9"><rect x="0.5" y="0.5" width="8" height="8" fill="#fff" stroke="#7d8cb8" stroke-width="1"/><path d="M2 4.5 H7 M4.5 2 V7" stroke="#000" stroke-width="1.1"/></svg><div class="t cl" style="left:101.5px;top:650.7px;width:43px;overflow:hidden;color:#111">105650</div><div class="t cl" style="left:149.5px;top:650.7px;width:69px;overflow:hidden;color:#111">03M</div><div class="t cl" style="left:223.5px;top:650.7px;width:477px;overflow:hidden;color:#111">Armature Rég. 15M bar 20'</div><div class="t cl" style="left:705.5px;top:650.7px;width:65px;overflow:hidden;color:#111">Prix standard</div><div class="t cl" style="left:1366px;top:650.7px;width:56.5px;text-align:right;color:#111">0,00 $</div><div class="t cl" style="left:1426px;top:650.7px;width:56.0px;text-align:right;color:#111">0,00 $</div><div class="t cl" style="left:1485.5px;top:650.7px;width:58.5px;text-align:right;color:#111">0,00 %</div><div class="t cl" style="left:1547.5px;top:650.7px;width:72.5px;text-align:right;color:#111">12,00 $</div><div class="t cl" style="left:1623.5px;top:650.7px;width:84.5px;text-align:right;color:#111">1 572,00 $</div><div style="left:684px;top:649.0px;width:16.5px;height:19px;background:#f0f0f0;border:1px solid #b4b4b4;"></div><svg style="left:687.8px;top:654.0px;width:9px;height:9px" viewBox="0 0 9 9"><rect x="0.5" y="0.5" width="8" height="8" fill="#fff" stroke="#7d8cb8" stroke-width="1"/><path d="M2 4.5 H7 M4.5 2 V7" stroke="#000" stroke-width="1.1"/></svg><div style="left:770px;top:649.0px;width:16.5px;height:19px;background:#f0f0f0;border:1px solid #b4b4b4;"></div><svg style="left:773.8px;top:654.0px;width:9px;height:9px" viewBox="0 0 9 9"><rect x="0.5" y="0.5" width="8" height="8" fill="#fff" stroke="#7d8cb8" stroke-width="1"/><path d="M2 4.5 H7 M4.5 2 V7" stroke="#000" stroke-width="1.1"/></svg><div style="left:48px;top:668.5px;width:20px;height:20px;background:#f0f0f0;border-right:1px solid #8f8f8f;border-bottom:1px solid #8f8f8f;"></div><div style="left:68px;top:668.5px;width:1643.5px;height:20px;background:#fff;"></div><div style="left:68px;top:687.5px;width:1643.5px;height:1px;background:#e8e8e8;"></div><div style="left:146px;top:668.5px;width:1px;height:20px;background:#e6e6e6;"></div><div style="left:220px;top:668.5px;width:1px;height:20px;background:#e6e6e6;"></div><div style="left:702px;top:668.5px;width:1px;height:20px;background:#e6e6e6;"></div><div style="left:787px;top:668.5px;width:1px;height:20px;background:#e6e6e6;"></div><div style="left:839.5px;top:668.5px;width:1px;height:20px;background:#e6e6e6;"></div><div style="left:900px;top:668.5px;width:1px;height:20px;background:#e6e6e6;"></div><div style="left:939px;top:668.5px;width:1px;height:20px;background:#e6e6e6;"></div><div style="left:995px;top:668.5px;width:1px;height:20px;background:#e6e6e6;"></div><div style="left:1056px;top:668.5px;width:1px;height:20px;background:#e6e6e6;"></div><div style="left:1126.5px;top:668.5px;width:1px;height:20px;background:#e6e6e6;"></div><div style="left:1186.5px;top:668.5px;width:1px;height:20px;background:#e6e6e6;"></div><div style="left:1253px;top:668.5px;width:1px;height:20px;background:#e6e6e6;"></div><div style="left:1295px;top:668.5px;width:1px;height:20px;background:#e6e6e6;"></div><div style="left:1366px;top:668.5px;width:1px;height:20px;background:#e6e6e6;"></div><div style="left:1426px;top:668.5px;width:1px;height:20px;background:#e6e6e6;"></div><div style="left:1485.5px;top:668.5px;width:1px;height:20px;background:#e6e6e6;"></div><div style="left:1547.5px;top:668.5px;width:1px;height:20px;background:#e6e6e6;"></div><div style="left:1623.5px;top:668.5px;width:1px;height:20px;background:#e6e6e6;"></div><div style="left:81px;top:669.0px;width:16.5px;height:19px;background:#f0f0f0;border:1px solid #b4b4b4;"></div><svg style="left:84.8px;top:674.0px;width:9px;height:9px" viewBox="0 0 9 9"><rect x="0.5" y="0.5" width="8" height="8" fill="#fff" stroke="#7d8cb8" stroke-width="1"/><path d="M2 4.5 H7 M4.5 2 V7" stroke="#000" stroke-width="1.1"/></svg><div class="t cl" style="left:101.5px;top:670.7px;width:43px;overflow:hidden;color:#111">107217</div><div class="t cl" style="left:149.5px;top:670.7px;width:69px;overflow:hidden;color:#111">09M</div><div class="t cl" style="left:223.5px;top:670.7px;width:477px;overflow:hidden;color:#111">Peinture et Apprêt Latex intérieur</div><div class="t cl" style="left:705.5px;top:670.7px;width:65px;overflow:hidden;color:#111">Prix standard</div><div class="t cl" style="left:1366px;top:670.7px;width:56.5px;text-align:right;color:#111">0,00 $</div><div class="t cl" style="left:1426px;top:670.7px;width:56.0px;text-align:right;color:#111">0,00 $</div><div class="t cl" style="left:1485.5px;top:670.7px;width:58.5px;text-align:right;color:#111">0,00 %</div><div class="t cl" style="left:1547.5px;top:670.7px;width:72.5px;text-align:right;color:#111">70,00 $</div><div class="t cl" style="left:1623.5px;top:670.7px;width:84.5px;text-align:right;color:#111">1 330,00 $</div><div style="left:684px;top:669.0px;width:16.5px;height:19px;background:#f0f0f0;border:1px solid #b4b4b4;"></div><svg style="left:687.8px;top:674.0px;width:9px;height:9px" viewBox="0 0 9 9"><rect x="0.5" y="0.5" width="8" height="8" fill="#fff" stroke="#7d8cb8" stroke-width="1"/><path d="M2 4.5 H7 M4.5 2 V7" stroke="#000" stroke-width="1.1"/></svg><div style="left:770px;top:669.0px;width:16.5px;height:19px;background:#f0f0f0;border:1px solid #b4b4b4;"></div><svg style="left:773.8px;top:674.0px;width:9px;height:9px" viewBox="0 0 9 9"><rect x="0.5" y="0.5" width="8" height="8" fill="#fff" stroke="#7d8cb8" stroke-width="1"/><path d="M2 4.5 H7 M4.5 2 V7" stroke="#000" stroke-width="1.1"/></svg><div style="left:48px;top:688.5px;width:20px;height:20px;background:#f0f0f0;border-right:1px solid #8f8f8f;border-bottom:1px solid #8f8f8f;"></div><div style="left:68px;top:688.5px;width:1643.5px;height:20px;background:#fff;"></div><div style="left:68px;top:707.5px;width:1643.5px;height:1px;background:#e8e8e8;"></div><div style="left:146px;top:688.5px;width:1px;height:20px;background:#e6e6e6;"></div><div style="left:220px;top:688.5px;width:1px;height:20px;background:#e6e6e6;"></div><div style="left:702px;top:688.5px;width:1px;height:20px;background:#e6e6e6;"></div><div style="left:787px;top:688.5px;width:1px;height:20px;background:#e6e6e6;"></div><div style="left:839.5px;top:688.5px;width:1px;height:20px;background:#e6e6e6;"></div><div style="left:900px;top:688.5px;width:1px;height:20px;background:#e6e6e6;"></div><div style="left:939px;top:688.5px;width:1px;height:20px;background:#e6e6e6;"></div><div style="left:995px;top:688.5px;width:1px;height:20px;background:#e6e6e6;"></div><div style="left:1056px;top:688.5px;width:1px;height:20px;background:#e6e6e6;"></div><div style="left:1126.5px;top:688.5px;width:1px;height:20px;background:#e6e6e6;"></div><div style="left:1186.5px;top:688.5px;width:1px;height:20px;background:#e6e6e6;"></div><div style="left:1253px;top:688.5px;width:1px;height:20px;background:#e6e6e6;"></div><div style="left:1295px;top:688.5px;width:1px;height:20px;background:#e6e6e6;"></div><div style="left:1366px;top:688.5px;width:1px;height:20px;background:#e6e6e6;"></div><div style="left:1426px;top:688.5px;width:1px;height:20px;background:#e6e6e6;"></div><div style="left:1485.5px;top:688.5px;width:1px;height:20px;background:#e6e6e6;"></div><div style="left:1547.5px;top:688.5px;width:1px;height:20px;background:#e6e6e6;"></div><div style="left:1623.5px;top:688.5px;width:1px;height:20px;background:#e6e6e6;"></div><div style="left:81px;top:689.0px;width:16.5px;height:19px;background:#f0f0f0;border:1px solid #b4b4b4;"></div><svg style="left:84.8px;top:694.0px;width:9px;height:9px" viewBox="0 0 9 9"><rect x="0.5" y="0.5" width="8" height="8" fill="#fff" stroke="#7d8cb8" stroke-width="1"/><path d="M2 4.5 H7 M4.5 2 V7" stroke="#000" stroke-width="1.1"/></svg><div class="t cl" style="left:101.5px;top:690.7px;width:43px;overflow:hidden;color:#111">107218</div><div class="t cl" style="left:149.5px;top:690.7px;width:69px;overflow:hidden;color:#111">09M</div><div class="t cl" style="left:223.5px;top:690.7px;width:477px;overflow:hidden;color:#111">Peinture Latex intérieur 3.7 L</div><div class="t cl" style="left:705.5px;top:690.7px;width:65px;overflow:hidden;color:#111">Prix standard</div><div class="t cl" style="left:1366px;top:690.7px;width:56.5px;text-align:right;color:#111">0,00 $</div><div class="t cl" style="left:1426px;top:690.7px;width:56.0px;text-align:right;color:#111">0,00 $</div><div class="t cl" style="left:1485.5px;top:690.7px;width:58.5px;text-align:right;color:#111">0,00 %</div><div class="t cl" style="left:1547.5px;top:690.7px;width:72.5px;text-align:right;color:#111">70,00 $</div><div class="t cl" style="left:1623.5px;top:690.7px;width:84.5px;text-align:right;color:#111">1 330,00 $</div><div style="left:684px;top:689.0px;width:16.5px;height:19px;background:#f0f0f0;border:1px solid #b4b4b4;"></div><svg style="left:687.8px;top:694.0px;width:9px;height:9px" viewBox="0 0 9 9"><rect x="0.5" y="0.5" width="8" height="8" fill="#fff" stroke="#7d8cb8" stroke-width="1"/><path d="M2 4.5 H7 M4.5 2 V7" stroke="#000" stroke-width="1.1"/></svg><div style="left:770px;top:689.0px;width:16.5px;height:19px;background:#f0f0f0;border:1px solid #b4b4b4;"></div><svg style="left:773.8px;top:694.0px;width:9px;height:9px" viewBox="0 0 9 9"><rect x="0.5" y="0.5" width="8" height="8" fill="#fff" stroke="#7d8cb8" stroke-width="1"/><path d="M2 4.5 H7 M4.5 2 V7" stroke="#000" stroke-width="1.1"/></svg><div style="left:48px;top:708.5px;width:20px;height:20px;background:#f0f0f0;border-right:1px solid #8f8f8f;border-bottom:1px solid #8f8f8f;"></div><div style="left:68px;top:708.5px;width:1643.5px;height:20px;background:#fff;"></div><div style="left:68px;top:727.5px;width:1643.5px;height:1px;background:#e8e8e8;"></div><div style="left:146px;top:708.5px;width:1px;height:20px;background:#e6e6e6;"></div><div style="left:220px;top:708.5px;width:1px;height:20px;background:#e6e6e6;"></div><div style="left:702px;top:708.5px;width:1px;height:20px;background:#e6e6e6;"></div><div style="left:787px;top:708.5px;width:1px;height:20px;background:#e6e6e6;"></div><div style="left:839.5px;top:708.5px;width:1px;height:20px;background:#e6e6e6;"></div><div style="left:900px;top:708.5px;width:1px;height:20px;background:#e6e6e6;"></div><div style="left:939px;top:708.5px;width:1px;height:20px;background:#e6e6e6;"></div><div style="left:995px;top:708.5px;width:1px;height:20px;background:#e6e6e6;"></div><div style="left:1056px;top:708.5px;width:1px;height:20px;background:#e6e6e6;"></div><div style="left:1126.5px;top:708.5px;width:1px;height:20px;background:#e6e6e6;"></div><div style="left:1186.5px;top:708.5px;width:1px;height:20px;background:#e6e6e6;"></div><div style="left:1253px;top:708.5px;width:1px;height:20px;background:#e6e6e6;"></div><div style="left:1295px;top:708.5px;width:1px;height:20px;background:#e6e6e6;"></div><div style="left:1366px;top:708.5px;width:1px;height:20px;background:#e6e6e6;"></div><div style="left:1426px;top:708.5px;width:1px;height:20px;background:#e6e6e6;"></div><div style="left:1485.5px;top:708.5px;width:1px;height:20px;background:#e6e6e6;"></div><div style="left:1547.5px;top:708.5px;width:1px;height:20px;background:#e6e6e6;"></div><div style="left:1623.5px;top:708.5px;width:1px;height:20px;background:#e6e6e6;"></div><div style="left:81px;top:709.0px;width:16.5px;height:19px;background:#f0f0f0;border:1px solid #b4b4b4;"></div><svg style="left:84.8px;top:714.0px;width:9px;height:9px" viewBox="0 0 9 9"><rect x="0.5" y="0.5" width="8" height="8" fill="#fff" stroke="#7d8cb8" stroke-width="1"/><path d="M2 4.5 H7 M4.5 2 V7" stroke="#000" stroke-width="1.1"/></svg><div class="t cl" style="left:101.5px;top:710.7px;width:43px;overflow:hidden;color:#111">106695</div><div class="t cl" style="left:149.5px;top:710.7px;width:69px;overflow:hidden;color:#111">06M</div><div class="t cl" style="left:223.5px;top:710.7px;width:477px;overflow:hidden;color:#111">Contre-plaqué BC Fir standard</div><div class="t cl" style="left:705.5px;top:710.7px;width:65px;overflow:hidden;color:#111">Prix standard</div><div class="t cl" style="left:1366px;top:710.7px;width:56.5px;text-align:right;color:#111">0,00 $</div><div class="t cl" style="left:1426px;top:710.7px;width:56.0px;text-align:right;color:#111">0,00 $</div><div class="t cl" style="left:1485.5px;top:710.7px;width:58.5px;text-align:right;color:#111">0,00 %</div><div class="t cl" style="left:1547.5px;top:710.7px;width:72.5px;text-align:right;color:#111">29,50 $</div><div class="t cl" style="left:1623.5px;top:710.7px;width:84.5px;text-align:right;color:#111">1 239,00 $</div><div style="left:684px;top:709.0px;width:16.5px;height:19px;background:#f0f0f0;border:1px solid #b4b4b4;"></div><svg style="left:687.8px;top:714.0px;width:9px;height:9px" viewBox="0 0 9 9"><rect x="0.5" y="0.5" width="8" height="8" fill="#fff" stroke="#7d8cb8" stroke-width="1"/><path d="M2 4.5 H7 M4.5 2 V7" stroke="#000" stroke-width="1.1"/></svg><div style="left:770px;top:709.0px;width:16.5px;height:19px;background:#f0f0f0;border:1px solid #b4b4b4;"></div><svg style="left:773.8px;top:714.0px;width:9px;height:9px" viewBox="0 0 9 9"><rect x="0.5" y="0.5" width="8" height="8" fill="#fff" stroke="#7d8cb8" stroke-width="1"/><path d="M2 4.5 H7 M4.5 2 V7" stroke="#000" stroke-width="1.1"/></svg><div style="left:48px;top:728.5px;width:20px;height:20px;background:#f0f0f0;border-right:1px solid #8f8f8f;border-bottom:1px solid #8f8f8f;"></div><div style="left:68px;top:728.5px;width:1643.5px;height:20px;background:#fff;"></div><div style="left:68px;top:747.5px;width:1643.5px;height:1px;background:#e8e8e8;"></div><div style="left:146px;top:728.5px;width:1px;height:20px;background:#e6e6e6;"></div><div style="left:220px;top:728.5px;width:1px;height:20px;background:#e6e6e6;"></div><div style="left:702px;top:728.5px;width:1px;height:20px;background:#e6e6e6;"></div><div style="left:787px;top:728.5px;width:1px;height:20px;background:#e6e6e6;"></div><div style="left:839.5px;top:728.5px;width:1px;height:20px;background:#e6e6e6;"></div><div style="left:900px;top:728.5px;width:1px;height:20px;background:#e6e6e6;"></div><div style="left:939px;top:728.5px;width:1px;height:20px;background:#e6e6e6;"></div><div style="left:995px;top:728.5px;width:1px;height:20px;background:#e6e6e6;"></div><div style="left:1056px;top:728.5px;width:1px;height:20px;background:#e6e6e6;"></div><div style="left:1126.5px;top:728.5px;width:1px;height:20px;background:#e6e6e6;"></div><div style="left:1186.5px;top:728.5px;width:1px;height:20px;background:#e6e6e6;"></div><div style="left:1253px;top:728.5px;width:1px;height:20px;background:#e6e6e6;"></div><div style="left:1295px;top:728.5px;width:1px;height:20px;background:#e6e6e6;"></div><div style="left:1366px;top:728.5px;width:1px;height:20px;background:#e6e6e6;"></div><div style="left:1426px;top:728.5px;width:1px;height:20px;background:#e6e6e6;"></div><div style="left:1485.5px;top:728.5px;width:1px;height:20px;background:#e6e6e6;"></div><div style="left:1547.5px;top:728.5px;width:1px;height:20px;background:#e6e6e6;"></div><div style="left:1623.5px;top:728.5px;width:1px;height:20px;background:#e6e6e6;"></div><div style="left:81px;top:729.0px;width:16.5px;height:19px;background:#f0f0f0;border:1px solid #b4b4b4;"></div><svg style="left:84.8px;top:734.0px;width:9px;height:9px" viewBox="0 0 9 9"><rect x="0.5" y="0.5" width="8" height="8" fill="#fff" stroke="#7d8cb8" stroke-width="1"/><path d="M2 4.5 H7 M4.5 2 V7" stroke="#000" stroke-width="1.1"/></svg><div class="t cl" style="left:101.5px;top:730.7px;width:43px;overflow:hidden;color:#111">103127</div><div class="t cl" style="left:149.5px;top:730.7px;width:69px;overflow:hidden;color:#111">06M</div><div class="t cl" style="left:223.5px;top:730.7px;width:477px;overflow:hidden;color:#111">Épinette Sec  2" x  4" x 10'</div><div class="t cl" style="left:705.5px;top:730.7px;width:65px;overflow:hidden;color:#111">Prix standard</div><div class="t cl" style="left:1366px;top:730.7px;width:56.5px;text-align:right;color:#111">0,00 $</div><div class="t cl" style="left:1426px;top:730.7px;width:56.0px;text-align:right;color:#111">0,00 $</div><div class="t cl" style="left:1485.5px;top:730.7px;width:58.5px;text-align:right;color:#111">0,00 %</div><div class="t cl" style="left:1547.5px;top:730.7px;width:72.5px;text-align:right;color:#111">4,09 $</div><div class="t cl" style="left:1623.5px;top:730.7px;width:84.5px;text-align:right;color:#111">1 214,73 $</div><div style="left:684px;top:729.0px;width:16.5px;height:19px;background:#f0f0f0;border:1px solid #b4b4b4;"></div><svg style="left:687.8px;top:734.0px;width:9px;height:9px" viewBox="0 0 9 9"><rect x="0.5" y="0.5" width="8" height="8" fill="#fff" stroke="#7d8cb8" stroke-width="1"/><path d="M2 4.5 H7 M4.5 2 V7" stroke="#000" stroke-width="1.1"/></svg><div style="left:770px;top:729.0px;width:16.5px;height:19px;background:#f0f0f0;border:1px solid #b4b4b4;"></div><svg style="left:773.8px;top:734.0px;width:9px;height:9px" viewBox="0 0 9 9"><rect x="0.5" y="0.5" width="8" height="8" fill="#fff" stroke="#7d8cb8" stroke-width="1"/><path d="M2 4.5 H7 M4.5 2 V7" stroke="#000" stroke-width="1.1"/></svg><div style="left:48px;top:748.5px;width:20px;height:20px;background:#f0f0f0;border-right:1px solid #8f8f8f;border-bottom:1px solid #8f8f8f;"></div><div style="left:68px;top:748.5px;width:1643.5px;height:20px;background:#fff;"></div><div style="left:68px;top:767.5px;width:1643.5px;height:1px;background:#e8e8e8;"></div><div style="left:146px;top:748.5px;width:1px;height:20px;background:#e6e6e6;"></div><div style="left:220px;top:748.5px;width:1px;height:20px;background:#e6e6e6;"></div><div style="left:702px;top:748.5px;width:1px;height:20px;background:#e6e6e6;"></div><div style="left:787px;top:748.5px;width:1px;height:20px;background:#e6e6e6;"></div><div style="left:839.5px;top:748.5px;width:1px;height:20px;background:#e6e6e6;"></div><div style="left:900px;top:748.5px;width:1px;height:20px;background:#e6e6e6;"></div><div style="left:939px;top:748.5px;width:1px;height:20px;background:#e6e6e6;"></div><div style="left:995px;top:748.5px;width:1px;height:20px;background:#e6e6e6;"></div><div style="left:1056px;top:748.5px;width:1px;height:20px;background:#e6e6e6;"></div><div style="left:1126.5px;top:748.5px;width:1px;height:20px;background:#e6e6e6;"></div><div style="left:1186.5px;top:748.5px;width:1px;height:20px;background:#e6e6e6;"></div><div style="left:1253px;top:748.5px;width:1px;height:20px;background:#e6e6e6;"></div><div style="left:1295px;top:748.5px;width:1px;height:20px;background:#e6e6e6;"></div><div style="left:1366px;top:748.5px;width:1px;height:20px;background:#e6e6e6;"></div><div style="left:1426px;top:748.5px;width:1px;height:20px;background:#e6e6e6;"></div><div style="left:1485.5px;top:748.5px;width:1px;height:20px;background:#e6e6e6;"></div><div style="left:1547.5px;top:748.5px;width:1px;height:20px;background:#e6e6e6;"></div><div style="left:1623.5px;top:748.5px;width:1px;height:20px;background:#e6e6e6;"></div><div style="left:81px;top:749.0px;width:16.5px;height:19px;background:#f0f0f0;border:1px solid #b4b4b4;"></div><svg style="left:84.8px;top:754.0px;width:9px;height:9px" viewBox="0 0 9 9"><rect x="0.5" y="0.5" width="8" height="8" fill="#fff" stroke="#7d8cb8" stroke-width="1"/><path d="M2 4.5 H7 M4.5 2 V7" stroke="#000" stroke-width="1.1"/></svg><div class="t cl" style="left:101.5px;top:750.7px;width:43px;overflow:hidden;color:#111">102226</div><div class="t cl" style="left:149.5px;top:750.7px;width:69px;overflow:hidden;color:#111">06M</div><div class="t cl" style="left:223.5px;top:750.7px;width:477px;overflow:hidden;color:#111">Épinette Sec  2" x 12" x 12'</div><div class="t cl" style="left:705.5px;top:750.7px;width:65px;overflow:hidden;color:#111">Prix standard</div><div class="t cl" style="left:1366px;top:750.7px;width:56.5px;text-align:right;color:#111">0,00 $</div><div class="t cl" style="left:1426px;top:750.7px;width:56.0px;text-align:right;color:#111">0,00 $</div><div class="t cl" style="left:1485.5px;top:750.7px;width:58.5px;text-align:right;color:#111">0,00 %</div><div class="t cl" style="left:1547.5px;top:750.7px;width:72.5px;text-align:right;color:#111">27,27 $</div><div class="t cl" style="left:1623.5px;top:750.7px;width:84.5px;text-align:right;color:#111">1 172,61 $</div><div style="left:684px;top:749.0px;width:16.5px;height:19px;background:#f0f0f0;border:1px solid #b4b4b4;"></div><svg style="left:687.8px;top:754.0px;width:9px;height:9px" viewBox="0 0 9 9"><rect x="0.5" y="0.5" width="8" height="8" fill="#fff" stroke="#7d8cb8" stroke-width="1"/><path d="M2 4.5 H7 M4.5 2 V7" stroke="#000" stroke-width="1.1"/></svg><div style="left:770px;top:749.0px;width:16.5px;height:19px;background:#f0f0f0;border:1px solid #b4b4b4;"></div><svg style="left:773.8px;top:754.0px;width:9px;height:9px" viewBox="0 0 9 9"><rect x="0.5" y="0.5" width="8" height="8" fill="#fff" stroke="#7d8cb8" stroke-width="1"/><path d="M2 4.5 H7 M4.5 2 V7" stroke="#000" stroke-width="1.1"/></svg><div style="left:48px;top:768.5px;width:20px;height:20px;background:#f0f0f0;border-right:1px solid #8f8f8f;border-bottom:1px solid #8f8f8f;"></div><div style="left:68px;top:768.5px;width:1643.5px;height:20px;background:#fff;"></div><div style="left:68px;top:787.5px;width:1643.5px;height:1px;background:#e8e8e8;"></div><div style="left:146px;top:768.5px;width:1px;height:20px;background:#e6e6e6;"></div><div style="left:220px;top:768.5px;width:1px;height:20px;background:#e6e6e6;"></div><div style="left:702px;top:768.5px;width:1px;height:20px;background:#e6e6e6;"></div><div style="left:787px;top:768.5px;width:1px;height:20px;background:#e6e6e6;"></div><div style="left:839.5px;top:768.5px;width:1px;height:20px;background:#e6e6e6;"></div><div style="left:900px;top:768.5px;width:1px;height:20px;background:#e6e6e6;"></div><div style="left:939px;top:768.5px;width:1px;height:20px;background:#e6e6e6;"></div><div style="left:995px;top:768.5px;width:1px;height:20px;background:#e6e6e6;"></div><div style="left:1056px;top:768.5px;width:1px;height:20px;background:#e6e6e6;"></div><div style="left:1126.5px;top:768.5px;width:1px;height:20px;background:#e6e6e6;"></div><div style="left:1186.5px;top:768.5px;width:1px;height:20px;background:#e6e6e6;"></div><div style="left:1253px;top:768.5px;width:1px;height:20px;background:#e6e6e6;"></div><div style="left:1295px;top:768.5px;width:1px;height:20px;background:#e6e6e6;"></div><div style="left:1366px;top:768.5px;width:1px;height:20px;background:#e6e6e6;"></div><div style="left:1426px;top:768.5px;width:1px;height:20px;background:#e6e6e6;"></div><div style="left:1485.5px;top:768.5px;width:1px;height:20px;background:#e6e6e6;"></div><div style="left:1547.5px;top:768.5px;width:1px;height:20px;background:#e6e6e6;"></div><div style="left:1623.5px;top:768.5px;width:1px;height:20px;background:#e6e6e6;"></div><div style="left:81px;top:769.0px;width:16.5px;height:19px;background:#f0f0f0;border:1px solid #b4b4b4;"></div><svg style="left:84.8px;top:774.0px;width:9px;height:9px" viewBox="0 0 9 9"><rect x="0.5" y="0.5" width="8" height="8" fill="#fff" stroke="#7d8cb8" stroke-width="1"/><path d="M2 4.5 H7 M4.5 2 V7" stroke="#000" stroke-width="1.1"/></svg><div class="t cl" style="left:101.5px;top:770.7px;width:43px;overflow:hidden;color:#111">107281</div><div class="t cl" style="left:149.5px;top:770.7px;width:69px;overflow:hidden;color:#111">07M</div><div class="t cl" style="left:223.5px;top:770.7px;width:477px;overflow:hidden;color:#111">Isolant Styrofoam SM Dow R</div><div class="t cl" style="left:705.5px;top:770.7px;width:65px;overflow:hidden;color:#111">Prix standard</div><div class="t cl" style="left:1366px;top:770.7px;width:56.5px;text-align:right;color:#111">0,00 $</div><div class="t cl" style="left:1426px;top:770.7px;width:56.0px;text-align:right;color:#111">0,00 $</div><div class="t cl" style="left:1485.5px;top:770.7px;width:58.5px;text-align:right;color:#111">0,00 %</div><div class="t cl" style="left:1547.5px;top:770.7px;width:72.5px;text-align:right;color:#111">32,00 $</div><div class="t cl" style="left:1623.5px;top:770.7px;width:84.5px;text-align:right;color:#111">1 152,00 $</div><div style="left:684px;top:769.0px;width:16.5px;height:19px;background:#f0f0f0;border:1px solid #b4b4b4;"></div><svg style="left:687.8px;top:774.0px;width:9px;height:9px" viewBox="0 0 9 9"><rect x="0.5" y="0.5" width="8" height="8" fill="#fff" stroke="#7d8cb8" stroke-width="1"/><path d="M2 4.5 H7 M4.5 2 V7" stroke="#000" stroke-width="1.1"/></svg><div style="left:770px;top:769.0px;width:16.5px;height:19px;background:#f0f0f0;border:1px solid #b4b4b4;"></div><svg style="left:773.8px;top:774.0px;width:9px;height:9px" viewBox="0 0 9 9"><rect x="0.5" y="0.5" width="8" height="8" fill="#fff" stroke="#7d8cb8" stroke-width="1"/><path d="M2 4.5 H7 M4.5 2 V7" stroke="#000" stroke-width="1.1"/></svg><div style="left:48px;top:788.5px;width:20px;height:20px;background:#f0f0f0;border-right:1px solid #8f8f8f;border-bottom:1px solid #8f8f8f;"></div><div style="left:68px;top:788.5px;width:1643.5px;height:20px;background:#fff;"></div><div style="left:68px;top:807.5px;width:1643.5px;height:1px;background:#e8e8e8;"></div><div style="left:146px;top:788.5px;width:1px;height:20px;background:#e6e6e6;"></div><div style="left:220px;top:788.5px;width:1px;height:20px;background:#e6e6e6;"></div><div style="left:702px;top:788.5px;width:1px;height:20px;background:#e6e6e6;"></div><div style="left:787px;top:788.5px;width:1px;height:20px;background:#e6e6e6;"></div><div style="left:839.5px;top:788.5px;width:1px;height:20px;background:#e6e6e6;"></div><div style="left:900px;top:788.5px;width:1px;height:20px;background:#e6e6e6;"></div><div style="left:939px;top:788.5px;width:1px;height:20px;background:#e6e6e6;"></div><div style="left:995px;top:788.5px;width:1px;height:20px;background:#e6e6e6;"></div><div style="left:1056px;top:788.5px;width:1px;height:20px;background:#e6e6e6;"></div><div style="left:1126.5px;top:788.5px;width:1px;height:20px;background:#e6e6e6;"></div><div style="left:1186.5px;top:788.5px;width:1px;height:20px;background:#e6e6e6;"></div><div style="left:1253px;top:788.5px;width:1px;height:20px;background:#e6e6e6;"></div><div style="left:1295px;top:788.5px;width:1px;height:20px;background:#e6e6e6;"></div><div style="left:1366px;top:788.5px;width:1px;height:20px;background:#e6e6e6;"></div><div style="left:1426px;top:788.5px;width:1px;height:20px;background:#e6e6e6;"></div><div style="left:1485.5px;top:788.5px;width:1px;height:20px;background:#e6e6e6;"></div><div style="left:1547.5px;top:788.5px;width:1px;height:20px;background:#e6e6e6;"></div><div style="left:1623.5px;top:788.5px;width:1px;height:20px;background:#e6e6e6;"></div><div style="left:81px;top:789.0px;width:16.5px;height:19px;background:#f0f0f0;border:1px solid #b4b4b4;"></div><svg style="left:84.8px;top:794.0px;width:9px;height:9px" viewBox="0 0 9 9"><rect x="0.5" y="0.5" width="8" height="8" fill="#fff" stroke="#7d8cb8" stroke-width="1"/><path d="M2 4.5 H7 M4.5 2 V7" stroke="#000" stroke-width="1.1"/></svg><div class="t cl" style="left:101.5px;top:790.7px;width:43px;overflow:hidden;color:#111">106708</div><div class="t cl" style="left:149.5px;top:790.7px;width:69px;overflow:hidden;color:#111">06M</div><div class="t cl" style="left:223.5px;top:790.7px;width:477px;overflow:hidden;color:#111">Contre-plaqué BC Fir Sélect t</div><div class="t cl" style="left:705.5px;top:790.7px;width:65px;overflow:hidden;color:#111">Prix standard</div><div class="t cl" style="left:1366px;top:790.7px;width:56.5px;text-align:right;color:#111">0,00 $</div><div class="t cl" style="left:1426px;top:790.7px;width:56.0px;text-align:right;color:#111">0,00 $</div><div class="t cl" style="left:1485.5px;top:790.7px;width:58.5px;text-align:right;color:#111">0,00 %</div><div class="t cl" style="left:1547.5px;top:790.7px;width:72.5px;text-align:right;color:#111">43,85 $</div><div class="t cl" style="left:1623.5px;top:790.7px;width:84.5px;text-align:right;color:#111">1 140,10 $</div><div style="left:684px;top:789.0px;width:16.5px;height:19px;background:#f0f0f0;border:1px solid #b4b4b4;"></div><svg style="left:687.8px;top:794.0px;width:9px;height:9px" viewBox="0 0 9 9"><rect x="0.5" y="0.5" width="8" height="8" fill="#fff" stroke="#7d8cb8" stroke-width="1"/><path d="M2 4.5 H7 M4.5 2 V7" stroke="#000" stroke-width="1.1"/></svg><div style="left:770px;top:789.0px;width:16.5px;height:19px;background:#f0f0f0;border:1px solid #b4b4b4;"></div><svg style="left:773.8px;top:794.0px;width:9px;height:9px" viewBox="0 0 9 9"><rect x="0.5" y="0.5" width="8" height="8" fill="#fff" stroke="#7d8cb8" stroke-width="1"/><path d="M2 4.5 H7 M4.5 2 V7" stroke="#000" stroke-width="1.1"/></svg><div style="left:48px;top:808.5px;width:20px;height:20px;background:#f0f0f0;border-right:1px solid #8f8f8f;border-bottom:1px solid #8f8f8f;"></div><div style="left:68px;top:808.5px;width:1643.5px;height:20px;background:#fff;"></div><div style="left:68px;top:827.5px;width:1643.5px;height:1px;background:#e8e8e8;"></div><div style="left:146px;top:808.5px;width:1px;height:20px;background:#e6e6e6;"></div><div style="left:220px;top:808.5px;width:1px;height:20px;background:#e6e6e6;"></div><div style="left:702px;top:808.5px;width:1px;height:20px;background:#e6e6e6;"></div><div style="left:787px;top:808.5px;width:1px;height:20px;background:#e6e6e6;"></div><div style="left:839.5px;top:808.5px;width:1px;height:20px;background:#e6e6e6;"></div><div style="left:900px;top:808.5px;width:1px;height:20px;background:#e6e6e6;"></div><div style="left:939px;top:808.5px;width:1px;height:20px;background:#e6e6e6;"></div><div style="left:995px;top:808.5px;width:1px;height:20px;background:#e6e6e6;"></div><div style="left:1056px;top:808.5px;width:1px;height:20px;background:#e6e6e6;"></div><div style="left:1126.5px;top:808.5px;width:1px;height:20px;background:#e6e6e6;"></div><div style="left:1186.5px;top:808.5px;width:1px;height:20px;background:#e6e6e6;"></div><div style="left:1253px;top:808.5px;width:1px;height:20px;background:#e6e6e6;"></div><div style="left:1295px;top:808.5px;width:1px;height:20px;background:#e6e6e6;"></div><div style="left:1366px;top:808.5px;width:1px;height:20px;background:#e6e6e6;"></div><div style="left:1426px;top:808.5px;width:1px;height:20px;background:#e6e6e6;"></div><div style="left:1485.5px;top:808.5px;width:1px;height:20px;background:#e6e6e6;"></div><div style="left:1547.5px;top:808.5px;width:1px;height:20px;background:#e6e6e6;"></div><div style="left:1623.5px;top:808.5px;width:1px;height:20px;background:#e6e6e6;"></div><div style="left:81px;top:809.0px;width:16.5px;height:19px;background:#f0f0f0;border:1px solid #b4b4b4;"></div><svg style="left:84.8px;top:814.0px;width:9px;height:9px" viewBox="0 0 9 9"><rect x="0.5" y="0.5" width="8" height="8" fill="#fff" stroke="#7d8cb8" stroke-width="1"/><path d="M2 4.5 H7 M4.5 2 V7" stroke="#000" stroke-width="1.1"/></svg><div class="t cl" style="left:101.5px;top:810.7px;width:43px;overflow:hidden;color:#111">103809</div><div class="t cl" style="left:149.5px;top:810.7px;width:69px;overflow:hidden;color:#111">09M</div><div class="t cl" style="left:223.5px;top:810.7px;width:477px;overflow:hidden;color:#111">Composé à Joint Léger CGC</div><div class="t cl" style="left:705.5px;top:810.7px;width:65px;overflow:hidden;color:#111">Prix standard</div><div class="t cl" style="left:1366px;top:810.7px;width:56.5px;text-align:right;color:#111">0,00 $</div><div class="t cl" style="left:1426px;top:810.7px;width:56.0px;text-align:right;color:#111">0,00 $</div><div class="t cl" style="left:1485.5px;top:810.7px;width:58.5px;text-align:right;color:#111">0,00 %</div><div class="t cl" style="left:1547.5px;top:810.7px;width:72.5px;text-align:right;color:#111">40,00 $</div><div class="t cl" style="left:1623.5px;top:810.7px;width:84.5px;text-align:right;color:#111">1 000,00 $</div><div style="left:684px;top:809.0px;width:16.5px;height:19px;background:#f0f0f0;border:1px solid #b4b4b4;"></div><svg style="left:687.8px;top:814.0px;width:9px;height:9px" viewBox="0 0 9 9"><rect x="0.5" y="0.5" width="8" height="8" fill="#fff" stroke="#7d8cb8" stroke-width="1"/><path d="M2 4.5 H7 M4.5 2 V7" stroke="#000" stroke-width="1.1"/></svg><div style="left:770px;top:809.0px;width:16.5px;height:19px;background:#f0f0f0;border:1px solid #b4b4b4;"></div><svg style="left:773.8px;top:814.0px;width:9px;height:9px" viewBox="0 0 9 9"><rect x="0.5" y="0.5" width="8" height="8" fill="#fff" stroke="#7d8cb8" stroke-width="1"/><path d="M2 4.5 H7 M4.5 2 V7" stroke="#000" stroke-width="1.1"/></svg><div style="left:48px;top:828.5px;width:20px;height:20px;background:#f0f0f0;border-right:1px solid #8f8f8f;border-bottom:1px solid #8f8f8f;"></div><div style="left:68px;top:828.5px;width:1643.5px;height:20px;background:#fff;"></div><div style="left:68px;top:847.5px;width:1643.5px;height:1px;background:#e8e8e8;"></div><div style="left:146px;top:828.5px;width:1px;height:20px;background:#e6e6e6;"></div><div style="left:220px;top:828.5px;width:1px;height:20px;background:#e6e6e6;"></div><div style="left:702px;top:828.5px;width:1px;height:20px;background:#e6e6e6;"></div><div style="left:787px;top:828.5px;width:1px;height:20px;background:#e6e6e6;"></div><div style="left:839.5px;top:828.5px;width:1px;height:20px;background:#e6e6e6;"></div><div style="left:900px;top:828.5px;width:1px;height:20px;background:#e6e6e6;"></div><div style="left:939px;top:828.5px;width:1px;height:20px;background:#e6e6e6;"></div><div style="left:995px;top:828.5px;width:1px;height:20px;background:#e6e6e6;"></div><div style="left:1056px;top:828.5px;width:1px;height:20px;background:#e6e6e6;"></div><div style="left:1126.5px;top:828.5px;width:1px;height:20px;background:#e6e6e6;"></div><div style="left:1186.5px;top:828.5px;width:1px;height:20px;background:#e6e6e6;"></div><div style="left:1253px;top:828.5px;width:1px;height:20px;background:#e6e6e6;"></div><div style="left:1295px;top:828.5px;width:1px;height:20px;background:#e6e6e6;"></div><div style="left:1366px;top:828.5px;width:1px;height:20px;background:#e6e6e6;"></div><div style="left:1426px;top:828.5px;width:1px;height:20px;background:#e6e6e6;"></div><div style="left:1485.5px;top:828.5px;width:1px;height:20px;background:#e6e6e6;"></div><div style="left:1547.5px;top:828.5px;width:1px;height:20px;background:#e6e6e6;"></div><div style="left:1623.5px;top:828.5px;width:1px;height:20px;background:#e6e6e6;"></div><div style="left:81px;top:829.0px;width:16.5px;height:19px;background:#f0f0f0;border:1px solid #b4b4b4;"></div><svg style="left:84.8px;top:834.0px;width:9px;height:9px" viewBox="0 0 9 9"><rect x="0.5" y="0.5" width="8" height="8" fill="#fff" stroke="#7d8cb8" stroke-width="1"/><path d="M2 4.5 H7 M4.5 2 V7" stroke="#000" stroke-width="1.1"/></svg><div class="t cl" style="left:101.5px;top:830.7px;width:43px;overflow:hidden;color:#111">103897</div><div class="t cl" style="left:149.5px;top:830.7px;width:69px;overflow:hidden;color:#111">06M</div><div class="t cl" style="left:223.5px;top:830.7px;width:477px;overflow:hidden;color:#111">Contre-plaqué Épinette Std C</div><div class="t cl" style="left:705.5px;top:830.7px;width:65px;overflow:hidden;color:#111">Prix standard</div><div class="t cl" style="left:1366px;top:830.7px;width:56.5px;text-align:right;color:#111">0,00 $</div><div class="t cl" style="left:1426px;top:830.7px;width:56.0px;text-align:right;color:#111">0,00 $</div><div class="t cl" style="left:1485.5px;top:830.7px;width:58.5px;text-align:right;color:#111">0,00 %</div><div class="t cl" style="left:1547.5px;top:830.7px;width:72.5px;text-align:right;color:#111">70,00 $</div><div class="t cl" style="left:1623.5px;top:830.7px;width:84.5px;text-align:right;color:#111">980,00 $</div><div style="left:684px;top:829.0px;width:16.5px;height:19px;background:#f0f0f0;border:1px solid #b4b4b4;"></div><svg style="left:687.8px;top:834.0px;width:9px;height:9px" viewBox="0 0 9 9"><rect x="0.5" y="0.5" width="8" height="8" fill="#fff" stroke="#7d8cb8" stroke-width="1"/><path d="M2 4.5 H7 M4.5 2 V7" stroke="#000" stroke-width="1.1"/></svg><div style="left:770px;top:829.0px;width:16.5px;height:19px;background:#f0f0f0;border:1px solid #b4b4b4;"></div><svg style="left:773.8px;top:834.0px;width:9px;height:9px" viewBox="0 0 9 9"><rect x="0.5" y="0.5" width="8" height="8" fill="#fff" stroke="#7d8cb8" stroke-width="1"/><path d="M2 4.5 H7 M4.5 2 V7" stroke="#000" stroke-width="1.1"/></svg><div style="left:48px;top:848.5px;width:20px;height:20px;background:#f0f0f0;border-right:1px solid #8f8f8f;border-bottom:1px solid #8f8f8f;"></div><div style="left:68px;top:848.5px;width:1643.5px;height:20px;background:#fff;"></div><div style="left:68px;top:867.5px;width:1643.5px;height:1px;background:#e8e8e8;"></div><div style="left:146px;top:848.5px;width:1px;height:20px;background:#e6e6e6;"></div><div style="left:220px;top:848.5px;width:1px;height:20px;background:#e6e6e6;"></div><div style="left:702px;top:848.5px;width:1px;height:20px;background:#e6e6e6;"></div><div style="left:787px;top:848.5px;width:1px;height:20px;background:#e6e6e6;"></div><div style="left:839.5px;top:848.5px;width:1px;height:20px;background:#e6e6e6;"></div><div style="left:900px;top:848.5px;width:1px;height:20px;background:#e6e6e6;"></div><div style="left:939px;top:848.5px;width:1px;height:20px;background:#e6e6e6;"></div><div style="left:995px;top:848.5px;width:1px;height:20px;background:#e6e6e6;"></div><div style="left:1056px;top:848.5px;width:1px;height:20px;background:#e6e6e6;"></div><div style="left:1126.5px;top:848.5px;width:1px;height:20px;background:#e6e6e6;"></div><div style="left:1186.5px;top:848.5px;width:1px;height:20px;background:#e6e6e6;"></div><div style="left:1253px;top:848.5px;width:1px;height:20px;background:#e6e6e6;"></div><div style="left:1295px;top:848.5px;width:1px;height:20px;background:#e6e6e6;"></div><div style="left:1366px;top:848.5px;width:1px;height:20px;background:#e6e6e6;"></div><div style="left:1426px;top:848.5px;width:1px;height:20px;background:#e6e6e6;"></div><div style="left:1485.5px;top:848.5px;width:1px;height:20px;background:#e6e6e6;"></div><div style="left:1547.5px;top:848.5px;width:1px;height:20px;background:#e6e6e6;"></div><div style="left:1623.5px;top:848.5px;width:1px;height:20px;background:#e6e6e6;"></div><div style="left:81px;top:849.0px;width:16.5px;height:19px;background:#f0f0f0;border:1px solid #b4b4b4;"></div><svg style="left:84.8px;top:854.0px;width:9px;height:9px" viewBox="0 0 9 9"><rect x="0.5" y="0.5" width="8" height="8" fill="#fff" stroke="#7d8cb8" stroke-width="1"/><path d="M2 4.5 H7 M4.5 2 V7" stroke="#000" stroke-width="1.1"/></svg><div class="t cl" style="left:101.5px;top:850.7px;width:43px;overflow:hidden;color:#111">104068</div><div class="t cl" style="left:149.5px;top:850.7px;width:69px;overflow:hidden;color:#111">08M</div><div class="t cl" style="left:223.5px;top:850.7px;width:477px;overflow:hidden;color:#111">Porte Bostonian Pré-Montée</div><div class="t cl" style="left:705.5px;top:850.7px;width:65px;overflow:hidden;color:#111">Prix standard</div><div class="t cl" style="left:1366px;top:850.7px;width:56.5px;text-align:right;color:#111">0,00 $</div><div class="t cl" style="left:1426px;top:850.7px;width:56.0px;text-align:right;color:#111">0,00 $</div><div class="t cl" style="left:1485.5px;top:850.7px;width:58.5px;text-align:right;color:#111">0,00 %</div><div class="t cl" style="left:1547.5px;top:850.7px;width:72.5px;text-align:right;color:#111">184,90 $</div><div class="t cl" style="left:1623.5px;top:850.7px;width:84.5px;text-align:right;color:#111">924,50 $</div><div style="left:684px;top:849.0px;width:16.5px;height:19px;background:#f0f0f0;border:1px solid #b4b4b4;"></div><svg style="left:687.8px;top:854.0px;width:9px;height:9px" viewBox="0 0 9 9"><rect x="0.5" y="0.5" width="8" height="8" fill="#fff" stroke="#7d8cb8" stroke-width="1"/><path d="M2 4.5 H7 M4.5 2 V7" stroke="#000" stroke-width="1.1"/></svg><div style="left:770px;top:849.0px;width:16.5px;height:19px;background:#f0f0f0;border:1px solid #b4b4b4;"></div><svg style="left:773.8px;top:854.0px;width:9px;height:9px" viewBox="0 0 9 9"><rect x="0.5" y="0.5" width="8" height="8" fill="#fff" stroke="#7d8cb8" stroke-width="1"/><path d="M2 4.5 H7 M4.5 2 V7" stroke="#000" stroke-width="1.1"/></svg><div style="left:48px;top:868.5px;width:20px;height:20px;background:#f0f0f0;border-right:1px solid #8f8f8f;border-bottom:1px solid #8f8f8f;"></div><div style="left:68px;top:868.5px;width:1643.5px;height:20px;background:#fff;"></div><div style="left:68px;top:887.5px;width:1643.5px;height:1px;background:#e8e8e8;"></div><div style="left:146px;top:868.5px;width:1px;height:20px;background:#e6e6e6;"></div><div style="left:220px;top:868.5px;width:1px;height:20px;background:#e6e6e6;"></div><div style="left:702px;top:868.5px;width:1px;height:20px;background:#e6e6e6;"></div><div style="left:787px;top:868.5px;width:1px;height:20px;background:#e6e6e6;"></div><div style="left:839.5px;top:868.5px;width:1px;height:20px;background:#e6e6e6;"></div><div style="left:900px;top:868.5px;width:1px;height:20px;background:#e6e6e6;"></div><div style="left:939px;top:868.5px;width:1px;height:20px;background:#e6e6e6;"></div><div style="left:995px;top:868.5px;width:1px;height:20px;background:#e6e6e6;"></div><div style="left:1056px;top:868.5px;width:1px;height:20px;background:#e6e6e6;"></div><div style="left:1126.5px;top:868.5px;width:1px;height:20px;background:#e6e6e6;"></div><div style="left:1186.5px;top:868.5px;width:1px;height:20px;background:#e6e6e6;"></div><div style="left:1253px;top:868.5px;width:1px;height:20px;background:#e6e6e6;"></div><div style="left:1295px;top:868.5px;width:1px;height:20px;background:#e6e6e6;"></div><div style="left:1366px;top:868.5px;width:1px;height:20px;background:#e6e6e6;"></div><div style="left:1426px;top:868.5px;width:1px;height:20px;background:#e6e6e6;"></div><div style="left:1485.5px;top:868.5px;width:1px;height:20px;background:#e6e6e6;"></div><div style="left:1547.5px;top:868.5px;width:1px;height:20px;background:#e6e6e6;"></div><div style="left:1623.5px;top:868.5px;width:1px;height:20px;background:#e6e6e6;"></div><div style="left:81px;top:869.0px;width:16.5px;height:19px;background:#f0f0f0;border:1px solid #b4b4b4;"></div><svg style="left:84.8px;top:874.0px;width:9px;height:9px" viewBox="0 0 9 9"><rect x="0.5" y="0.5" width="8" height="8" fill="#fff" stroke="#7d8cb8" stroke-width="1"/><path d="M2 4.5 H7 M4.5 2 V7" stroke="#000" stroke-width="1.1"/></svg><div class="t cl" style="left:101.5px;top:870.7px;width:43px;overflow:hidden;color:#111">102186</div><div class="t cl" style="left:149.5px;top:870.7px;width:69px;overflow:hidden;color:#111">06M</div><div class="t cl" style="left:223.5px;top:870.7px;width:477px;overflow:hidden;color:#111">Épinette Rég   2" x  4" x 12'</div><div class="t cl" style="left:705.5px;top:870.7px;width:65px;overflow:hidden;color:#111">Prix standard</div><div class="t cl" style="left:1366px;top:870.7px;width:56.5px;text-align:right;color:#111">0,00 $</div><div class="t cl" style="left:1426px;top:870.7px;width:56.0px;text-align:right;color:#111">0,00 $</div><div class="t cl" style="left:1485.5px;top:870.7px;width:58.5px;text-align:right;color:#111">0,00 %</div><div class="t cl" style="left:1547.5px;top:870.7px;width:72.5px;text-align:right;color:#111">8,00 $</div><div class="t cl" style="left:1623.5px;top:870.7px;width:84.5px;text-align:right;color:#111">880,00 $</div><div style="left:684px;top:869.0px;width:16.5px;height:19px;background:#f0f0f0;border:1px solid #b4b4b4;"></div><svg style="left:687.8px;top:874.0px;width:9px;height:9px" viewBox="0 0 9 9"><rect x="0.5" y="0.5" width="8" height="8" fill="#fff" stroke="#7d8cb8" stroke-width="1"/><path d="M2 4.5 H7 M4.5 2 V7" stroke="#000" stroke-width="1.1"/></svg><div style="left:770px;top:869.0px;width:16.5px;height:19px;background:#f0f0f0;border:1px solid #b4b4b4;"></div><svg style="left:773.8px;top:874.0px;width:9px;height:9px" viewBox="0 0 9 9"><rect x="0.5" y="0.5" width="8" height="8" fill="#fff" stroke="#7d8cb8" stroke-width="1"/><path d="M2 4.5 H7 M4.5 2 V7" stroke="#000" stroke-width="1.1"/></svg><div style="left:48px;top:888.5px;width:20px;height:20px;background:#f0f0f0;border-right:1px solid #8f8f8f;border-bottom:1px solid #8f8f8f;"></div><div style="left:68px;top:888.5px;width:1643.5px;height:20px;background:#fff;"></div><div style="left:68px;top:907.5px;width:1643.5px;height:1px;background:#e8e8e8;"></div><div style="left:146px;top:888.5px;width:1px;height:20px;background:#e6e6e6;"></div><div style="left:220px;top:888.5px;width:1px;height:20px;background:#e6e6e6;"></div><div style="left:702px;top:888.5px;width:1px;height:20px;background:#e6e6e6;"></div><div style="left:787px;top:888.5px;width:1px;height:20px;background:#e6e6e6;"></div><div style="left:839.5px;top:888.5px;width:1px;height:20px;background:#e6e6e6;"></div><div style="left:900px;top:888.5px;width:1px;height:20px;background:#e6e6e6;"></div><div style="left:939px;top:888.5px;width:1px;height:20px;background:#e6e6e6;"></div><div style="left:995px;top:888.5px;width:1px;height:20px;background:#e6e6e6;"></div><div style="left:1056px;top:888.5px;width:1px;height:20px;background:#e6e6e6;"></div><div style="left:1126.5px;top:888.5px;width:1px;height:20px;background:#e6e6e6;"></div><div style="left:1186.5px;top:888.5px;width:1px;height:20px;background:#e6e6e6;"></div><div style="left:1253px;top:888.5px;width:1px;height:20px;background:#e6e6e6;"></div><div style="left:1295px;top:888.5px;width:1px;height:20px;background:#e6e6e6;"></div><div style="left:1366px;top:888.5px;width:1px;height:20px;background:#e6e6e6;"></div><div style="left:1426px;top:888.5px;width:1px;height:20px;background:#e6e6e6;"></div><div style="left:1485.5px;top:888.5px;width:1px;height:20px;background:#e6e6e6;"></div><div style="left:1547.5px;top:888.5px;width:1px;height:20px;background:#e6e6e6;"></div><div style="left:1623.5px;top:888.5px;width:1px;height:20px;background:#e6e6e6;"></div><div style="left:81px;top:889.0px;width:16.5px;height:19px;background:#f0f0f0;border:1px solid #b4b4b4;"></div><svg style="left:84.8px;top:894.0px;width:9px;height:9px" viewBox="0 0 9 9"><rect x="0.5" y="0.5" width="8" height="8" fill="#fff" stroke="#7d8cb8" stroke-width="1"/><path d="M2 4.5 H7 M4.5 2 V7" stroke="#000" stroke-width="1.1"/></svg><div class="t cl" style="left:101.5px;top:890.7px;width:43px;overflow:hidden;color:#111">103930</div><div class="t cl" style="left:149.5px;top:890.7px;width:69px;overflow:hidden;color:#111">07M</div><div class="t cl" style="left:223.5px;top:890.7px;width:477px;overflow:hidden;color:#111">Laine insonorisante Quiétude</div><div class="t cl" style="left:705.5px;top:890.7px;width:65px;overflow:hidden;color:#111">Prix standard</div><div class="t cl" style="left:1366px;top:890.7px;width:56.5px;text-align:right;color:#111">0,00 $</div><div class="t cl" style="left:1426px;top:890.7px;width:56.0px;text-align:right;color:#111">0,00 $</div><div class="t cl" style="left:1485.5px;top:890.7px;width:58.5px;text-align:right;color:#111">0,00 %</div><div class="t cl" style="left:1547.5px;top:890.7px;width:72.5px;text-align:right;color:#111">26,89 $</div><div class="t cl" style="left:1623.5px;top:890.7px;width:84.5px;text-align:right;color:#111">752,92 $</div><div style="left:684px;top:889.0px;width:16.5px;height:19px;background:#f0f0f0;border:1px solid #b4b4b4;"></div><svg style="left:687.8px;top:894.0px;width:9px;height:9px" viewBox="0 0 9 9"><rect x="0.5" y="0.5" width="8" height="8" fill="#fff" stroke="#7d8cb8" stroke-width="1"/><path d="M2 4.5 H7 M4.5 2 V7" stroke="#000" stroke-width="1.1"/></svg><div style="left:770px;top:889.0px;width:16.5px;height:19px;background:#f0f0f0;border:1px solid #b4b4b4;"></div><svg style="left:773.8px;top:894.0px;width:9px;height:9px" viewBox="0 0 9 9"><rect x="0.5" y="0.5" width="8" height="8" fill="#fff" stroke="#7d8cb8" stroke-width="1"/><path d="M2 4.5 H7 M4.5 2 V7" stroke="#000" stroke-width="1.1"/></svg><div style="left:48px;top:908.5px;width:20px;height:20px;background:#f0f0f0;border-right:1px solid #8f8f8f;border-bottom:1px solid #8f8f8f;"></div><div style="left:68px;top:908.5px;width:1643.5px;height:20px;background:#fff;"></div><div style="left:68px;top:927.5px;width:1643.5px;height:1px;background:#e8e8e8;"></div><div style="left:146px;top:908.5px;width:1px;height:20px;background:#e6e6e6;"></div><div style="left:220px;top:908.5px;width:1px;height:20px;background:#e6e6e6;"></div><div style="left:702px;top:908.5px;width:1px;height:20px;background:#e6e6e6;"></div><div style="left:787px;top:908.5px;width:1px;height:20px;background:#e6e6e6;"></div><div style="left:839.5px;top:908.5px;width:1px;height:20px;background:#e6e6e6;"></div><div style="left:900px;top:908.5px;width:1px;height:20px;background:#e6e6e6;"></div><div style="left:939px;top:908.5px;width:1px;height:20px;background:#e6e6e6;"></div><div style="left:995px;top:908.5px;width:1px;height:20px;background:#e6e6e6;"></div><div style="left:1056px;top:908.5px;width:1px;height:20px;background:#e6e6e6;"></div><div style="left:1126.5px;top:908.5px;width:1px;height:20px;background:#e6e6e6;"></div><div style="left:1186.5px;top:908.5px;width:1px;height:20px;background:#e6e6e6;"></div><div style="left:1253px;top:908.5px;width:1px;height:20px;background:#e6e6e6;"></div><div style="left:1295px;top:908.5px;width:1px;height:20px;background:#e6e6e6;"></div><div style="left:1366px;top:908.5px;width:1px;height:20px;background:#e6e6e6;"></div><div style="left:1426px;top:908.5px;width:1px;height:20px;background:#e6e6e6;"></div><div style="left:1485.5px;top:908.5px;width:1px;height:20px;background:#e6e6e6;"></div><div style="left:1547.5px;top:908.5px;width:1px;height:20px;background:#e6e6e6;"></div><div style="left:1623.5px;top:908.5px;width:1px;height:20px;background:#e6e6e6;"></div><div style="left:81px;top:909.0px;width:16.5px;height:19px;background:#f0f0f0;border:1px solid #b4b4b4;"></div><svg style="left:84.8px;top:914.0px;width:9px;height:9px" viewBox="0 0 9 9"><rect x="0.5" y="0.5" width="8" height="8" fill="#fff" stroke="#7d8cb8" stroke-width="1"/><path d="M2 4.5 H7 M4.5 2 V7" stroke="#000" stroke-width="1.1"/></svg><div class="t cl" style="left:101.5px;top:910.7px;width:43px;overflow:hidden;color:#111">103123</div><div class="t cl" style="left:149.5px;top:910.7px;width:69px;overflow:hidden;color:#111">06M</div><div class="t cl" style="left:223.5px;top:910.7px;width:477px;overflow:hidden;color:#111">Épinette Sec   2" x  4" x 12'</div><div class="t cl" style="left:705.5px;top:910.7px;width:65px;overflow:hidden;color:#111">Prix standard</div><div class="t cl" style="left:787px;top:910.7px;width:49.0px;text-align:right;color:#111">0,83</div><div class="t cl" style="left:839.5px;top:910.7px;width:57.0px;text-align:right;color:#111">888,00</div><div class="t cl" style="left:903.5px;top:910.7px;width:34px;overflow:hidden;color:#111">pi</div><div class="t cl" style="left:939px;top:910.7px;width:52.5px;text-align:right;color:#111">10,00 $</div><div class="t cl" style="left:995px;top:910.7px;width:57.5px;text-align:right;color:#111">72,92</div><div class="t cl" style="left:1056px;top:910.7px;width:67.0px;text-align:right;color:#111">1,49 %</div><div class="t cl" style="left:1126.5px;top:910.7px;width:56.5px;text-align:right;color:#111">1,08</div><div class="t cl" style="left:1186.5px;top:910.7px;width:63.0px;text-align:right;color:#111">74,00</div><div class="t cl" style="left:1256.5px;top:910.7px;width:37px;overflow:hidden;color:#111">Mcx</div><div class="t cl" style="left:1295px;top:910.7px;width:67.5px;text-align:right;color:#111">740,00 $</div><div class="t cl" style="left:1366px;top:910.7px;width:56.5px;text-align:right;color:#111">0,00 $</div><div class="t cl" style="left:1426px;top:910.7px;width:56.0px;text-align:right;color:#111">0,00 $</div><div class="t cl" style="left:1485.5px;top:910.7px;width:58.5px;text-align:right;color:#111">0,00 %</div><div class="t cl" style="left:1547.5px;top:910.7px;width:72.5px;text-align:right;color:#111">10,00 $</div><div class="t cl" style="left:1623.5px;top:910.7px;width:84.5px;text-align:right;color:#111">740,00 $</div><div style="left:684px;top:909.0px;width:16.5px;height:19px;background:#f0f0f0;border:1px solid #b4b4b4;"></div><svg style="left:687.8px;top:914.0px;width:9px;height:9px" viewBox="0 0 9 9"><rect x="0.5" y="0.5" width="8" height="8" fill="#fff" stroke="#7d8cb8" stroke-width="1"/><path d="M2 4.5 H7 M4.5 2 V7" stroke="#000" stroke-width="1.1"/></svg><div style="left:770px;top:909.0px;width:16.5px;height:19px;background:#f0f0f0;border:1px solid #b4b4b4;"></div><svg style="left:773.8px;top:914.0px;width:9px;height:9px" viewBox="0 0 9 9"><rect x="0.5" y="0.5" width="8" height="8" fill="#fff" stroke="#7d8cb8" stroke-width="1"/><path d="M2 4.5 H7 M4.5 2 V7" stroke="#000" stroke-width="1.1"/></svg><div style="left:47.8px;top:292px;width:1.4px;height:634px;background:#8a8a8a;"></div><div style="left:370px;top:540px;width:1011px;height:370px;background:#f0f0f0;"></div><div style="left:370px;top:549px;width:14px;height:16px;background:#10202c;"></div><svg style="left:371.5px;top:553.5px;width:11px;height:7px" viewBox="0 0 34 20" preserveAspectRatio="none"><path fill="#f0c000" fill-rule="evenodd" d="M0 10 L10 0 L20 10 L10 20 Z M6.4 10 L10 13.6 L13.6 10 L10 6.4 Z"/><path fill="#f0c000" fill-rule="evenodd" d="M14 10 L24 0 L34 10 L24 20 Z M20.4 10 L24 13.6 L27.6 10 L24 6.4 Z"/><path d="M6.5 2.7 L10.3 6.5 M13.5 9.7 L17.3 13.5 M16.9 6.7 L20.5 10.3" stroke="#10202c" stroke-width="0.9"/></svg><div class="t" style="left:388px;top:550px;font-size:14px;line-height:17px;color:#9b9b9b;letter-spacing:-0.35px;">Compilation détaillée - Matériel</div><div style="left:1257px;top:557px;width:11px;height:1px;background:#b0b0b0;"></div><div style="left:1305.5px;top:551.5px;width:11px;height:11px;border:1px solid #b0b0b0;"></div><svg style="left:1353.5px;top:551.5px;width:11px;height:11px" viewBox="0 0 11 11"><path d="M0.5 0.5 L10.5 10.5 M10.5 0.5 L0.5 10.5" stroke="#a8a8a8" stroke-width="1"/></svg><div style="left:371px;top:581px;width:59.5px;height:23.5px;background:#f2f2f2;border-top:1px solid #e2e2e2;border-left:1px solid #e2e2e2;"></div><div style="left:429.5px;top:581px;width:1.6px;height:24px;background:#111;"></div><div class="t" style="left:379.5px;top:586px;font-size:11.5px;color:#5a5a5a;letter-spacing:0.1px;">Détaillée</div><div style="left:370px;top:604px;width:1011px;height:1.8px;background:#6e6e6e;"></div><div style="left:370px;top:605.8px;width:1010px;height:32.5px;background:#fff;border-right:1px solid #dcdcdc;"></div><div style="left:370px;top:638px;width:1010px;height:1px;background:#e0e0e0;"></div><svg style="left:380px;top:612px;width:20px;height:20px" viewBox="0 0 20 20">
<path d="M0.5 5 H8 M4.2 1 V9" stroke="#04111b" stroke-width="2.2"/>
<path d="M1 19.5 L18 2.5" stroke="#04111b" stroke-width="1.6"/>
<path d="M10.5 15.5 H19" stroke="#04111b" stroke-width="2.2"/></svg><svg style="left:411px;top:614px;width:20px;height:17px" viewBox="0 0 20 17"><g fill="#04111b">
<rect x="0" y="0" width="13" height="13" rx="1.5"/><path d="M13 3.5 H16.5 L20 9 V13 H13 Z"/><circle cx="5" cy="14" r="2.8"/><circle cx="16" cy="14" r="2.8"/></g>
<path d="M14 5 H16 L18.2 8.8 H14 Z" fill="#fff"/></svg><div class="t" style="left:443px;top:609px;font-size:21px;line-height:24px;font-weight:bold;color:#04111b">%</div><svg style="left:475px;top:619px;width:20px;height:5px" viewBox="0 0 20 5"><rect x="0" y="0" width="20" height="4.5" rx="1" fill="#04111b"/>
<g stroke="#fff" stroke-width="0.9"><path d="M3 0 V2 M5.5 0 V2 M8 0 V2 M10.5 0 V2 M13 0 V2 M15.5 0 V2"/></g></svg><div style="left:370px;top:640px;width:1011px;height:21px;background:#efefef;border-top:1.5px solid #6a6a6a;border-bottom:1px solid #a0a0a0;border-right:1px solid #6a6a6a;"></div><div style="left:380.4px;top:641px;width:1.2px;height:19.5px;background:#a8a8a8;"></div><div style="left:393.4px;top:641px;width:1.2px;height:19.5px;background:#a8a8a8;"></div><div style="left:406.3px;top:641px;width:1.2px;height:19.5px;background:#a8a8a8;"></div><div style="left:419.3px;top:641px;width:1.2px;height:19.5px;background:#a8a8a8;"></div><div style="left:432.2px;top:641px;width:1.2px;height:19.5px;background:#a8a8a8;"></div><div style="left:445.1px;top:641px;width:1.2px;height:19.5px;background:#a8a8a8;"></div><div style="left:458.1px;top:641px;width:1.2px;height:19.5px;background:#a8a8a8;"></div><div style="left:471.3px;top:641px;width:1.2px;height:19.5px;background:#a8a8a8;"></div><div style="left:542.4px;top:641px;width:1.2px;height:19.5px;background:#a8a8a8;"></div><div style="left:619.6px;top:641px;width:1.2px;height:19.5px;background:#a8a8a8;"></div><div style="left:751.5px;top:641px;width:1.2px;height:19.5px;background:#a8a8a8;"></div><div style="left:858px;top:641px;width:1.2px;height:19.5px;background:#a8a8a8;"></div><div style="left:936.7px;top:641px;width:1.2px;height:19.5px;background:#a8a8a8;"></div><div style="left:996.5px;top:641px;width:1.2px;height:19.5px;background:#a8a8a8;"></div><div style="left:1047.5px;top:641px;width:1.2px;height:19.5px;background:#a8a8a8;"></div><div style="left:1107.5px;top:641px;width:1.2px;height:19.5px;background:#a8a8a8;"></div><div class="t" style="left:372.5px;top:643px;font-size:11.5px;color:#111;">1</div><div class="t" style="left:382.9px;top:643px;font-size:11.5px;color:#111;">2</div><div class="t" style="left:395.9px;top:643px;font-size:11.5px;color:#111;">3</div><div class="t" style="left:408.8px;top:643px;font-size:11.5px;color:#111;">4</div><div class="t" style="left:421.8px;top:643px;font-size:11.5px;color:#111;">5</div><div class="t" style="left:434.7px;top:643px;font-size:11.5px;color:#111;">6</div><div class="t" style="left:447.6px;top:643px;font-size:11.5px;color:#111;">7</div><div class="t" style="left:460.6px;top:643px;font-size:11.5px;color:#111;">*</div><div class="t" style="left:475.5px;top:643px;font-size:11.5px;color:#111;">Code</div><div class="t" style="left:546px;top:643px;font-size:11.5px;color:#111;">Code class.</div><div class="t" style="left:623px;top:643px;font-size:11.5px;color:#111;">Nom</div><div class="t" style="left:755px;top:643px;font-size:11.5px;color:#111;">Identification</div><div class="t" style="left:861px;top:643px;font-size:11.5px;color:#111;">Fournisseur</div><div class="t" style="left:940px;top:643px;font-size:11.5px;color:#111;">Coûtant</div><div class="t" style="left:1000px;top:643px;font-size:11.5px;color:#111;">Projet</div><div class="t" style="left:1051px;top:643px;font-size:11.5px;color:#111;">Coûtant</div><div class="t" style="left:1111px;top:643px;font-size:11.5px;color:#ff7f00;">Qté dim.</div><div class="t" style="left:1174px;top:643px;font-size:11.5px;color:#ff7f00;">Unité</div><div class="t" style="left:1221.5px;top:643px;font-size:11.5px;color:#0000ff;">Qté</div><div class="t" style="left:1261.5px;top:643px;font-size:11.5px;color:#0000ff;">% Perte</div><div class="t" style="left:1321px;top:643px;font-size:11.5px;color:#0000ff;">Qté perte</div><div style="left:370px;top:660.5px;width:1010px;height:250px;background:#ababab;"></div><div style="left:1380px;top:640px;width:1.2px;height:271px;background:#6a6a6a;"></div><div style="left:370px;top:660.5px;width:1010px;height:20px;background:#ffffff;"></div><div class="t" style="left:475.5px;top:663.5px;font-size:11px;color:#111;">102190</div><div class="t" style="left:546px;top:663.5px;font-size:11px;color:#111;">03M</div><div class="t" style="left:623px;top:663.5px;width:128px;overflow:hidden;font-size:11px;color:#111">Béton 30 Mpa G20 (m3)</div><div class="t" style="left:900px;top:663.5px;width:94px;text-align:right;font-size:11px;color:#111">200,00 $</div><div style="left:1016px;top:664.5px;width:12.5px;height:13px;background:linear-gradient(#e4e4e4,#fafafa);border:1px solid #8f8f8f;"></div><div class="t" style="left:1110px;top:663.5px;width:58px;text-align:right;font-size:11px;color:#111">76,00</div><div class="t" style="left:1174px;top:663.5px;font-size:11px;color:#111;">m3</div><div class="t" style="left:1200px;top:663.5px;width:55px;text-align:right;font-size:11px;color:#111">74,92</div><div class="t" style="left:1255px;top:663.5px;width:59px;text-align:right;font-size:11px;color:#111">1,44 %</div><div class="t" style="left:1361.5px;top:663.5px;width:18.5px;overflow:hidden;font-size:11px;color:#111">1,08</div><div style="left:370px;top:680.5px;width:1010px;height:20px;background:#cacbd7;"></div><div style="left:370px;top:680.5px;width:1010px;height:1px;background:#eceef2;"></div><div class="t" style="left:475.5px;top:683.5px;font-size:11px;color:#111;">200622Test</div><div class="t" style="left:546px;top:683.5px;font-size:11px;color:#111;"></div><div class="t" style="left:623px;top:683.5px;width:128px;overflow:hidden;font-size:11px;color:#111">Animalerie</div><div class="t" style="left:900px;top:683.5px;width:94px;text-align:right;font-size:11px;color:#111">200,00 $</div><div style="left:1016px;top:684.5px;width:12.5px;height:13px;background:linear-gradient(#e4e4e4,#fafafa);border:1px solid #8f8f8f;"></div><div class="t" style="left:1110px;top:683.5px;width:58px;text-align:right;font-size:11px;color:#111">76,00</div><div class="t" style="left:1174px;top:683.5px;font-size:11px;color:#111;">m3</div><div class="t" style="left:1200px;top:683.5px;width:55px;text-align:right;font-size:11px;color:#111">74,92</div><div class="t" style="left:1255px;top:683.5px;width:59px;text-align:right;font-size:11px;color:#111">1,44 %</div><div class="t" style="left:1361.5px;top:683.5px;width:18.5px;overflow:hidden;font-size:11px;color:#111">1,08</div><div style="left:370px;top:700.5px;width:1010px;height:20px;background:#2b5070;"></div><div style="left:370px;top:700.5px;width:1010px;height:1px;background:#eceef2;"></div><div class="t" style="left:475.5px;top:703.5px;font-size:11px;color:#fff;">107849</div><div class="t" style="left:546px;top:703.5px;font-size:11px;color:#fff;">00W</div><div class="t" style="left:623px;top:703.5px;width:128px;overflow:hidden;font-size:11px;color:#fff">Total du projet</div><div class="t" style="left:755px;top:703.5px;font-size:11px;color:#fff;">Montant Forfaitaire</div><div class="t" style="left:900px;top:703.5px;width:94px;text-align:right;font-size:11px;color:#fff">200,00 $</div><div style="left:1016px;top:704.5px;width:12.5px;height:13px;background:linear-gradient(#e4e4e4,#fafafa);border:1px solid #8f8f8f;"></div><div class="t" style="left:1110px;top:703.5px;width:58px;text-align:right;font-size:11px;color:#fff">76,00</div><div class="t" style="left:1174px;top:703.5px;font-size:11px;color:#fff;">m3</div><div class="t" style="left:1200px;top:703.5px;width:55px;text-align:right;font-size:11px;color:#fff">74,92</div><div class="t" style="left:1255px;top:703.5px;width:59px;text-align:right;font-size:11px;color:#fff">1,44 %</div><div class="t" style="left:1361.5px;top:703.5px;width:18.5px;overflow:hidden;font-size:11px;color:#fff">1,08</div><div style="left:370px;top:720.5px;width:1010px;height:20px;background:#0074d6;"></div><div style="left:370px;top:720.5px;width:1010px;height:1px;background:#eceef2;"></div><div class="t" style="left:475.5px;top:723.5px;font-size:11px;color:#fff;">107882</div><div class="t" style="left:546px;top:723.5px;font-size:11px;color:#fff;">03W</div><div class="t" style="left:623px;top:723.5px;width:128px;overflow:hidden;font-size:11px;color:#fff">03 -  Béton et Coffrages</div><div class="t" style="left:900px;top:723.5px;width:94px;text-align:right;font-size:11px;color:#fff">200,00 $</div><div style="left:1016px;top:724.5px;width:12.5px;height:13px;background:linear-gradient(#e4e4e4,#fafafa);border:1px solid #8f8f8f;"></div><div class="t" style="left:1110px;top:723.5px;width:58px;text-align:right;font-size:11px;color:#fff">76,00</div><div class="t" style="left:1174px;top:723.5px;font-size:11px;color:#fff;">m3</div><div class="t" style="left:1200px;top:723.5px;width:55px;text-align:right;font-size:11px;color:#fff">74,92</div><div class="t" style="left:1255px;top:723.5px;width:59px;text-align:right;font-size:11px;color:#fff">1,44 %</div><div class="t" style="left:1361.5px;top:723.5px;width:18.5px;overflow:hidden;font-size:11px;color:#fff">1,08</div><div style="left:370px;top:740.5px;width:1010px;height:20px;background:#cacbd7;"></div><div style="left:370px;top:740.5px;width:1010px;height:1px;background:#eceef2;"></div><div class="t" style="left:475.5px;top:743.5px;font-size:11px;color:#111;">107922</div><div class="t" style="left:546px;top:743.5px;font-size:11px;color:#111;">03A1</div><div class="t" style="left:623px;top:743.5px;width:128px;overflow:hidden;font-size:11px;color:#111">03-Mur de fondation au pied</div><div class="t" style="left:900px;top:743.5px;width:94px;text-align:right;font-size:11px;color:#111">200,00 $</div><div style="left:1016px;top:744.5px;width:12.5px;height:13px;background:linear-gradient(#e4e4e4,#fafafa);border:1px solid #8f8f8f;"></div><div class="t" style="left:1110px;top:743.5px;width:58px;text-align:right;font-size:11px;color:#111">44,00</div><div class="t" style="left:1174px;top:743.5px;font-size:11px;color:#111;">m3</div><div class="t" style="left:1200px;top:743.5px;width:55px;text-align:right;font-size:11px;color:#111">43,77</div><div class="t" style="left:1255px;top:743.5px;width:59px;text-align:right;font-size:11px;color:#111">0,52 %</div><div class="t" style="left:1361.5px;top:743.5px;width:18.5px;overflow:hidden;font-size:11px;color:#111">0,23</div><div style="left:370px;top:760.5px;width:1010px;height:20px;background:#d9dbe3;"></div><div style="left:370px;top:760.5px;width:1010px;height:1px;background:#eceef2;"></div><div class="t" style="left:475.5px;top:763.5px;font-size:11px;color:#111;">107992</div><div class="t" style="left:546px;top:763.5px;font-size:11px;color:#111;">03A2</div><div class="t" style="left:623px;top:763.5px;width:128px;overflow:hidden;font-size:11px;color:#111">Bétonnage murs de fondation</div><div class="t" style="left:900px;top:763.5px;width:94px;text-align:right;font-size:11px;color:#111">200,00 $</div><div style="left:1016px;top:764.5px;width:12.5px;height:13px;background:linear-gradient(#e4e4e4,#fafafa);border:1px solid #8f8f8f;"></div><div class="t" style="left:1110px;top:763.5px;width:58px;text-align:right;font-size:11px;color:#111">44,00</div><div class="t" style="left:1174px;top:763.5px;font-size:11px;color:#111;">m3</div><div class="t" style="left:1200px;top:763.5px;width:55px;text-align:right;font-size:11px;color:#111">43,77</div><div class="t" style="left:1255px;top:763.5px;width:59px;text-align:right;font-size:11px;color:#111">0,52 %</div><div class="t" style="left:1361.5px;top:763.5px;width:18.5px;overflow:hidden;font-size:11px;color:#111">0,23</div><div style="left:370px;top:780.5px;width:1010px;height:20px;background:#cacbd7;"></div><div style="left:370px;top:780.5px;width:1010px;height:1px;background:#eceef2;"></div><div class="t" style="left:475.5px;top:783.5px;font-size:11px;color:#111;">107790</div><div class="t" style="left:546px;top:783.5px;font-size:11px;color:#111;">03A1</div><div class="t" style="left:623px;top:783.5px;width:128px;overflow:hidden;font-size:11px;color:#111">03- Dalle de béton DIM</div><div class="t" style="left:755px;top:783.5px;font-size:11px;color:#111;">Garage</div><div class="t" style="left:900px;top:783.5px;width:94px;text-align:right;font-size:11px;color:#111">200,00 $</div><div style="left:1016px;top:784.5px;width:12.5px;height:13px;background:linear-gradient(#e4e4e4,#fafafa);border:1px solid #8f8f8f;"></div><div class="t" style="left:1110px;top:783.5px;width:58px;text-align:right;font-size:11px;color:#111">32,00</div><div class="t" style="left:1174px;top:783.5px;font-size:11px;color:#111;">m3</div><div class="t" style="left:1200px;top:783.5px;width:55px;text-align:right;font-size:11px;color:#111">31,15</div><div class="t" style="left:1255px;top:783.5px;width:59px;text-align:right;font-size:11px;color:#111">2,73 %</div><div class="t" style="left:1361.5px;top:783.5px;width:18.5px;overflow:hidden;font-size:11px;color:#111">0,85</div><div style="left:370px;top:800.5px;width:1010px;height:20px;background:#d9dbe3;"></div><div style="left:370px;top:800.5px;width:1010px;height:1px;background:#eceef2;"></div><div class="t" style="left:475.5px;top:803.5px;font-size:11px;color:#111;">107797</div><div class="t" style="left:546px;top:803.5px;font-size:11px;color:#111;">03A2</div><div class="t" style="left:623px;top:803.5px;width:128px;overflow:hidden;font-size:11px;color:#111">Bétonnage dalles de béton</div><div class="t" style="left:900px;top:803.5px;width:94px;text-align:right;font-size:11px;color:#111">200,00 $</div><div style="left:1016px;top:804.5px;width:12.5px;height:13px;background:linear-gradient(#e4e4e4,#fafafa);border:1px solid #8f8f8f;"></div><div class="t" style="left:1110px;top:803.5px;width:58px;text-align:right;font-size:11px;color:#111">32,00</div><div class="t" style="left:1174px;top:803.5px;font-size:11px;color:#111;">m3</div><div class="t" style="left:1200px;top:803.5px;width:55px;text-align:right;font-size:11px;color:#111">31,15</div><div class="t" style="left:1255px;top:803.5px;width:59px;text-align:right;font-size:11px;color:#111">2,73 %</div><div class="t" style="left:1361.5px;top:803.5px;width:18.5px;overflow:hidden;font-size:11px;color:#111">0,85</div><div style="left:370px;top:820.5px;width:1010px;height:1.2px;background:#8a8a8a;"></div><div style="left:374.1px;top:674.5px;width:1.2px;height:16.0px;background:#000;"></div><div style="left:374.6px;top:690.0px;width:9.0px;height:1.2px;background:#000;"></div><div style="left:387.1px;top:694.5px;width:1.2px;height:16.0px;background:#000;"></div><div style="left:387.6px;top:710.0px;width:9.0px;height:1.2px;background:#000;"></div><div style="left:400.1px;top:714.5px;width:1.2px;height:16.0px;background:#000;"></div><div style="left:400.6px;top:730.0px;width:9.0px;height:1.2px;background:#000;"></div><div style="left:413.1px;top:734.5px;width:1.2px;height:56.0px;background:#000;"></div><div style="left:413.6px;top:750.0px;width:9.0px;height:1.2px;background:#000;"></div><div style="left:413.6px;top:790.0px;width:9.0px;height:1.2px;background:#000;"></div><div style="left:426.1px;top:754.5px;width:1.2px;height:16.0px;background:#000;"></div><div style="left:426.6px;top:770.0px;width:9.0px;height:1.2px;background:#000;"></div><div style="left:426.1px;top:794.5px;width:1.2px;height:16.0px;background:#000;"></div><div style="left:426.6px;top:810.0px;width:9.0px;height:1.2px;background:#000;"></div><svg style="left:370.1px;top:666.0px;width:9px;height:9px" viewBox="0 0 9 9"><rect x="0.5" y="0.5" width="8" height="8" fill="#f4f4f4" stroke="#909090" stroke-width="1"/><path d="M2 4.5 H7" stroke="#2040a0" stroke-width="1.1"/></svg><svg style="left:383.1px;top:686.0px;width:9px;height:9px" viewBox="0 0 9 9"><rect x="0.5" y="0.5" width="8" height="8" fill="#f4f4f4" stroke="#909090" stroke-width="1"/><path d="M2 4.5 H7" stroke="#2040a0" stroke-width="1.1"/></svg><svg style="left:396.1px;top:706.0px;width:9px;height:9px" viewBox="0 0 9 9"><rect x="0.5" y="0.5" width="8" height="8" fill="#f4f4f4" stroke="#909090" stroke-width="1"/><path d="M2 4.5 H7" stroke="#2040a0" stroke-width="1.1"/></svg><svg style="left:409.1px;top:726.0px;width:9px;height:9px" viewBox="0 0 9 9"><rect x="0.5" y="0.5" width="8" height="8" fill="#f4f4f4" stroke="#909090" stroke-width="1"/><path d="M2 4.5 H7" stroke="#2040a0" stroke-width="1.1"/></svg><svg style="left:422.1px;top:746.0px;width:9px;height:9px" viewBox="0 0 9 9"><rect x="0.5" y="0.5" width="8" height="8" fill="#f4f4f4" stroke="#909090" stroke-width="1"/><path d="M2 4.5 H7" stroke="#2040a0" stroke-width="1.1"/></svg><svg style="left:435.1px;top:766.0px;width:9px;height:9px" viewBox="0 0 9 9"><rect x="0.5" y="0.5" width="8" height="8" fill="#f4f4f4" stroke="#909090" stroke-width="1"/><path d="M2 4.5 H7" stroke="#2040a0" stroke-width="1.1"/><path d="M4.5 2 V7" stroke="#2040a0" stroke-width="1.1"/></svg><svg style="left:422.1px;top:786.0px;width:9px;height:9px" viewBox="0 0 9 9"><rect x="0.5" y="0.5" width="8" height="8" fill="#f4f4f4" stroke="#909090" stroke-width="1"/><path d="M2 4.5 H7" stroke="#2040a0" stroke-width="1.1"/></svg><svg style="left:435.1px;top:806.0px;width:9px;height:9px" viewBox="0 0 9 9"><rect x="0.5" y="0.5" width="8" height="8" fill="#f4f4f4" stroke="#909090" stroke-width="1"/><path d="M2 4.5 H7" stroke="#2040a0" stroke-width="1.1"/><path d="M4.5 2 V7" stroke="#2040a0" stroke-width="1.1"/></svg><div style="left:370px;top:894px;width:1010px;height:16.5px;background:#f0f0f0;"></div><div style="left:384px;top:894px;width:630px;height:16.5px;background:#cdcdcd;"></div><svg style="left:373px;top:898px;width:8px;height:9px" viewBox="0 0 8 9"><path d="M6 1 L2 4.5 L6 8" stroke="#606060" stroke-width="1.6" fill="none"/></svg><svg style="left:1368px;top:898px;width:8px;height:9px" viewBox="0 0 8 9"><path d="M2 1 L6 4.5 L2 8" stroke="#606060" stroke-width="1.6" fill="none"/></svg></div><div style="left:1796px;top:5px;width:1.2px;height:921px;background:rgba(0,0,0,0.14);"></div><div style="left:5px;top:925px;width:1791px;height:1.2px;background:rgba(0,0,0,0.14);"></div><div style="left:101px;top:167px;width:149px;height:30.5px;border:3px solid #8e1b1b;box-shadow:2px 3px 4px rgba(0,0,0,0.35), inset 2px 2px 3px rgba(0,0,0,0.22);"></div><div style="left:44.3px;top:234px;width:58.7px;height:30.5px;border:3px solid #8e1b1b;box-shadow:2px 3px 4px rgba(0,0,0,0.35), inset 2px 2px 3px rgba(0,0,0,0.22);"></div><svg style="left:0;top:0;width:1806px;height:935px;filter:drop-shadow(2px 3px 2px rgba(0,0,0,0.35))" viewBox="0 0 1806 935"><line x1="88" y1="134" x2="117" y2="172" stroke="#8b0000" stroke-width="2.1"/><line x1="29" y1="294" x2="45.09877414192306" y2="268.91586354630596" stroke="#8b0000" stroke-width="2.1"/><polygon points="50.5,260.5 48.46511956044543,271.07635388953673 41.73242872340069,266.7553732030752" fill="#8b0000"/><line x1="1657.5" y1="285" x2="1651.4896216346838" y2="317.6814323614076" stroke="#8b0000" stroke-width="2.1"/><polygon points="1649.5,328.5 1647.555597038832,316.95793358515897 1655.4236462305355,318.4049311376562" fill="#8b0000"/><line x1="184" y1="512" x2="99.64573436718719" y2="390.5557557281982" stroke="#8b0000" stroke-width="2.1"/><polygon points="92.8,380.7 103.34164276526153,387.988605340503 95.94982596911285,393.12290611589344" fill="#8b0000"/><line x1="205" y1="530" x2="358.85962399098526" y2="555.3492319550627" stroke="#8b0000" stroke-width="2.1"/><polygon points="370.7,557.3 358.20936797600615,559.2960239580676 359.50988000596436,551.4024399520578" fill="#8b0000"/></svg><div style="left:71.0px;top:114.0px;width:29px;height:29px;border-radius:50%;background:#8b0000;box-shadow:1px 2px 3px rgba(0,0,0,0.35);"></div><div class="t" style="left:71.0px;top:119.0px;width:29px;text-align:center;font-size:17px;line-height:19px;color:#fff;">1</div><div style="left:13.100000000000001px;top:291.8px;width:29px;height:29px;border-radius:50%;background:#8b0000;box-shadow:1px 2px 3px rgba(0,0,0,0.35);"></div><div class="t" style="left:13.100000000000001px;top:296.8px;width:29px;text-align:center;font-size:17px;line-height:19px;color:#fff;">2</div><div style="left:1644.9px;top:256.5px;width:29px;height:29px;border-radius:50%;background:#8b0000;box-shadow:1px 2px 3px rgba(0,0,0,0.35);"></div><div class="t" style="left:1644.9px;top:261.5px;width:29px;text-align:center;font-size:17px;line-height:19px;color:#fff;">3</div><div style="left:178.0px;top:506.9px;width:29px;height:29px;border-radius:50%;background:#8b0000;box-shadow:1px 2px 3px rgba(0,0,0,0.35);"></div><div class="t" style="left:178.0px;top:511.9px;width:29px;text-align:center;font-size:17px;line-height:19px;color:#fff;">4</div>
</div>
</body></html>
